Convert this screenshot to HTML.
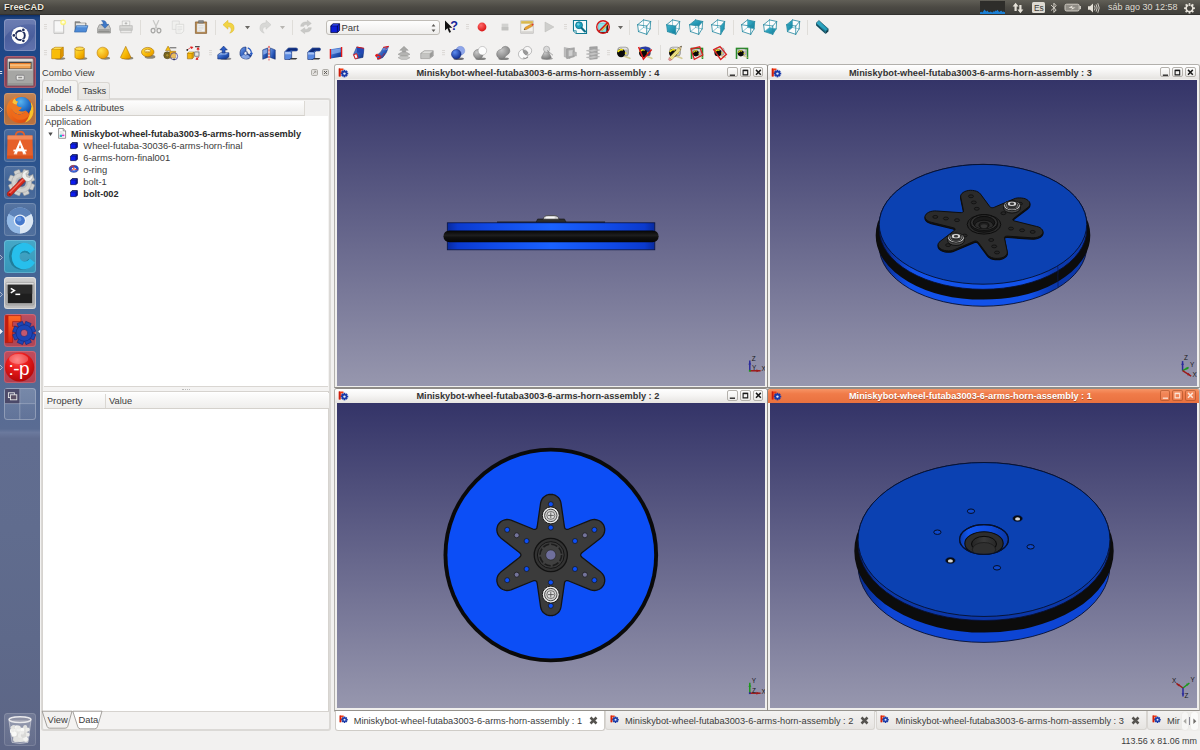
<!DOCTYPE html>
<html lang="es"><head><meta charset="utf-8"><title>FreeCAD</title>
<style>

*{box-sizing:border-box;margin:0;padding:0}
html,body{width:1200px;height:750px;overflow:hidden;background:#f2f1f0}
body{font-family:"Liberation Sans",sans-serif;font-size:9.3px;color:#3c3c3c}
#screen{position:relative;width:1200px;height:750px;overflow:hidden;background:#f2f1f0}
.abs{position:absolute}
svg{position:absolute;overflow:visible}
#topbar{position:absolute;left:0;top:0;width:1200px;height:15px;background:linear-gradient(#615f57,#4c4a44 50%,#403f3b);border-bottom:1px solid #33322f}
#topbar .title{position:absolute;left:4px;top:1px;font-weight:bold;font-size:9.2px;color:#ece8df;letter-spacing:.1px;line-height:12px;text-shadow:0 0 1.2px #1a1a18,0 .5px 1px #1a1a18}
#topbar .clock{position:absolute;left:1108px;top:1px;font-size:9px;color:#dfdbd2;line-height:12px;white-space:nowrap}
#launcher{position:absolute;left:0;top:15px;width:40.3px;height:735px;
 background:linear-gradient(#0c2e66 0,#1a3f7c 2.5px,#1f4584 5px,#1f4a8a 10%,#27508c 17%,#34598f 25%,#446494 34%,#4f6a96 44%,#566b94 52%,#5a6c93 56.3%,#6b799d 56.8%,#616d90 57.6%,#606c8e 70%,#5e698a 85%,#5c6585 100%)}
.tile{position:absolute;left:4px;width:32px;height:32.5px;border-radius:3.5px;overflow:hidden}
.tile svg{left:0;top:0}
.txt{position:absolute;white-space:nowrap;line-height:12px}
.b{font-weight:bold}
</style></head>
<body>
<div id="screen">
<div id="topbar"><span class="title">FreeCAD</span>
<div class="abs" style="left:980px;top:1px;width:25px;height:13px;background:#2e2d2a"></div><svg style="left:980px;top:1px" width="25" height="13"><polygon points="0,13 0,11.2 1.5,10.8 2.5,11.4 3.5,10 4.5,8.6 5.5,9.8 6.5,10.6 7.5,9.6 8.5,10.9 9.5,11.3 10.5,10.4 11.5,11 12.5,11.4 13.5,10.2 14.5,10.8 15.5,9.4 16.5,10 17.5,8.8 18.5,10.3 19.5,11 20.5,10.1 21.5,9.7 22.5,10.9 23.5,10.6 25,11.2 25,13" fill="#1b7fd4"/></svg><svg style="left:1012px;top:2px" width="12" height="12"><path d="M3.6 .8 L6.6 4.6 H4.7 V9 H2.5 V4.6 H.6Z M8.4 11.2 L5.4 7.4 H7.3 V3 H9.5 V7.4 H11.4Z" fill="#e6e2d9"/></svg><div class="abs" style="left:1032px;top:1.5px;width:12.5px;height:11.5px;background:#dedad2;border-radius:1.5px"></div><span class="txt" style="left:1034px;top:1.5px;font-size:8.4px;color:#3c3b37;line-height:12px;letter-spacing:-.2px">Es</span><svg style="left:1050px;top:2px" width="8" height="12"><path d="M1.3 3.3 L6.2 7.9 L3.9 10.4 V1.2 L6.2 3.7 L1.3 8.3" fill="none" stroke="#dcd8cf" stroke-width=".9" stroke-linejoin="round" stroke-linecap="round"/></svg><svg style="left:1064px;top:3px" width="18" height="10"><rect x="1" y="1.2" width="14.2" height="6.8" rx="1.6" fill="#8f8c85" stroke="#d8d4cb" stroke-width=".9"/><rect x="15.6" y="3" width="1.3" height="3.2" fill="#d8d4cb"/><path d="M4.5 4.8 L8.6 2.6 L8 4.4 H11.6 L7.4 6.8 L8 5 Z" fill="#e6e2d9"/></svg><svg style="left:1087px;top:2px" width="14" height="12"><path d="M1 4.3 H3 L6 1.6 V10.4 L3 7.7 H1Z" fill="#e6e2d9"/><path d="M7.6 3.9 Q8.9 6 7.6 8.1 M9.3 2.7 Q11.2 6 9.3 9.3 M11 1.6 Q13.6 6 11 10.4" fill="none" stroke="#dcd8cf" stroke-width=".9" stroke-linecap="round"/></svg><svg style="left:1184px;top:1.5px" width="11" height="12"><g transform="translate(5.5,6.2)"><g fill="#e6e2d9"><rect x="-.9" y="-5.4" width="1.8" height="2.6" transform="rotate(0)"/><rect x="-.9" y="-5.4" width="1.8" height="2.6" transform="rotate(45)"/><rect x="-.9" y="-5.4" width="1.8" height="2.6" transform="rotate(90)"/><rect x="-.9" y="-5.4" width="1.8" height="2.6" transform="rotate(135)"/><rect x="-.9" y="-5.4" width="1.8" height="2.6" transform="rotate(180)"/><rect x="-.9" y="-5.4" width="1.8" height="2.6" transform="rotate(225)"/><rect x="-.9" y="-5.4" width="1.8" height="2.6" transform="rotate(270)"/><rect x="-.9" y="-5.4" width="1.8" height="2.6" transform="rotate(315)"/></g><circle r="3.3" fill="none" stroke="#e6e2d9" stroke-width="1.5"/><rect x="-.7" y="-5.6" width="1.4" height="4.2" fill="#e6e2d9" stroke="#46443f" stroke-width=".5"/></g></svg><span class="clock">sáb ago 30 12:58</span></div>
<div id="launcher">
<div class="tile" style="top:3.6999999999999993px;background:linear-gradient(#5d70ac,#4a5e9c 55%,#5468a8);box-shadow:inset 0 0 0 1px rgba(255,255,255,.2)"><svg width="32" height="32.5" viewBox="0 0 32 32.5"><path d="M0 20 Q10 2 32 6 V0 H0Z" fill="rgba(255,255,255,.10)"/><path d="M4 32 Q30 30 32 8 V32Z" fill="rgba(255,255,255,.07)"/><circle cx="16.2" cy="16.4" r="8.6" fill="#fdfdfd"/><circle cx="16.2" cy="16.4" r="4.6" fill="none" stroke="#1e2c5c" stroke-width="1.9"/><circle cx="9.90" cy="16.40" r="2.1" fill="#fdfdfd"/><circle cx="9.90" cy="16.40" r="1.35" fill="#1e2c5c"/><circle cx="19.35" cy="10.94" r="2.1" fill="#fdfdfd"/><circle cx="19.35" cy="10.94" r="1.35" fill="#1e2c5c"/><circle cx="19.35" cy="21.86" r="2.1" fill="#fdfdfd"/><circle cx="19.35" cy="21.86" r="1.35" fill="#1e2c5c"/></svg></div>
<div class="tile" style="top:40.8px;background:linear-gradient(#96495c,#883f52 60%,#8e4558);box-shadow:inset 0 0 0 1px rgba(255,190,200,.22)"><svg width="32" height="32.5" viewBox="0 0 32 32.5"><path d="M3.4 4 Q3.4 2.4 5 2.4 H27.6 Q29.2 2.4 29.2 4 V29.4 H3.4Z" fill="#b1b1af" stroke="#77757a" stroke-width=".7"/><path d="M4 3 H28.6 V5.4 H4Z" fill="#dcdcda"/><path d="M5 5.8 H27.6 V13.4 H5Z" fill="#4a4846"/><path d="M6 7 H26.6 V12.4 H6Z" fill="#f0a050"/><path d="M6 8.6 H26.6 V9.8 H6Z" fill="#f8c88c"/><path d="M6 7 H26.6 V7.9 H6Z" fill="#e87c28"/><path d="M4 13 H28.6 V29 H4Z" fill="#a6a6a4"/><path d="M4 13 H28.6 V14.6 H4Z" fill="#c9c9c7"/><path d="M4 27 H28.6 V29 H4Z" fill="#979795"/><rect x="12.2" y="19.2" width="8" height="4.8" rx="1" fill="#e9e9e7" stroke="#77757a" stroke-width=".8"/><rect x="14.2" y="20.8" width="4" height="1.5" fill="#8c8a88"/></svg></div>
<div class="tile" style="top:77.7px;background:linear-gradient(#c58656,#b26c3a 60%,#b87444);box-shadow:inset 0 0 0 1px rgba(255,225,195,.22)"><svg width="32" height="32.5" viewBox="0 0 32 32.5"><defs><radialGradient id="ffg" cx="45%" cy="25%" r="80%"><stop offset="0" stop-color="#5ab4ee"/><stop offset=".5" stop-color="#2474cc"/><stop offset="1" stop-color="#143a8c"/></radialGradient><linearGradient id="ffo" x1="0" y1="0" x2="1" y2="1"><stop offset="0" stop-color="#f08a2a"/><stop offset=".5" stop-color="#ea6418"/><stop offset="1" stop-color="#d8400c"/></linearGradient></defs><circle cx="16" cy="16.6" r="13.4" fill="url(#ffo)"/><path d="M27 9 Q31 15 28.6 22.4 Q26 28 21 29.4 Q27.4 23 25.6 13Z" fill="#f8c22a"/><circle cx="17.6" cy="13.6" r="9.8" fill="url(#ffg)"/><path d="M4.4 10.6 Q6.4 6.6 10.6 5.4 Q11.4 7.8 14 8.8 Q12 10.4 12.8 12.6 Q14.6 14.6 17.8 14.2 Q17.2 16.8 14.6 17.6 Q18 19.6 21.6 17.6 Q19.6 21.6 15 21.4 Q10 21 8 16.6 Q5.4 14.6 4.4 10.6Z" fill="#ee7a20"/><path d="M8.4 9.4 Q10.2 11.6 12.8 11.4 Q12.6 9.8 14 8.8 Q11.4 7.8 10.6 5.4 Q8.8 7 8.4 9.4Z" fill="#f8c43a"/><path d="M8 16.6 Q10 21 15 21.4 Q19.6 21.6 21.6 17.6 Q24 19 25.4 22 Q21 28 13.4 26.4 Q7.4 24 6 17.6Z" fill="#ee6a1a"/></svg></div>
<div class="tile" style="top:114.30000000000001px;background:linear-gradient(rgba(255,255,255,.17),rgba(255,255,255,.07) 50%,rgba(255,255,255,.11));box-shadow:inset 0 0 0 1px rgba(255,255,255,.16)"><svg width="32" height="32.5" viewBox="0 0 32 32.5"><path d="M11.6 7 Q11.6 2.6 16 2.6 Q20.4 2.6 20.4 7" fill="none" stroke="#e0602c" stroke-width="1.6"/><path d="M3.6 6.4 H28.4 L29 29.4 H3Z" fill="#e6602a"/><path d="M3.6 6.4 H28.4 L28.5 10.4 H3.5Z" fill="#f2895a"/><path d="M3.1 26.4 H28.9 L29 29.4 H3Z" fill="#d6501c"/><path d="M16 10.8 L22 24.6 H19 L18 21.8 H14 L13 24.6 H10Z M16 15.4 L14.8 19.2 H17.2Z" fill="#fff" fill-rule="evenodd"/><rect x="9.4" y="20.6" width="13.2" height="1.8" fill="#fff"/><rect x="9.8" y="24.4" width="3.4" height=".9" fill="#fff"/><rect x="18.8" y="24.4" width="3.4" height=".9" fill="#fff"/></svg></div>
<div class="tile" style="top:151px;background:linear-gradient(rgba(255,255,255,.17),rgba(255,255,255,.07) 50%,rgba(255,255,255,.11));box-shadow:inset 0 0 0 1px rgba(255,255,255,.16)"><svg width="32" height="32.5" viewBox="0 0 32 32.5"><g transform="translate(17.6,16.6)" fill="#d2d2d0" stroke="#9a9a98" stroke-width=".5"><rect x="-3" y="-13.2" width="6" height="5.4" rx=".9" transform="rotate(22)"/><rect x="-3" y="-13.2" width="6" height="5.4" rx=".9" transform="rotate(67)"/><rect x="-3" y="-13.2" width="6" height="5.4" rx=".9" transform="rotate(112)"/><rect x="-3" y="-13.2" width="6" height="5.4" rx=".9" transform="rotate(157)"/><rect x="-3" y="-13.2" width="6" height="5.4" rx=".9" transform="rotate(202)"/><rect x="-3" y="-13.2" width="6" height="5.4" rx=".9" transform="rotate(247)"/><rect x="-3" y="-13.2" width="6" height="5.4" rx=".9" transform="rotate(292)"/><rect x="-3" y="-13.2" width="6" height="5.4" rx=".9" transform="rotate(337)"/><circle r="10"/></g><circle cx="17.6" cy="16.6" r="6.2" fill="#bcbcba"/><circle cx="17.6" cy="16.6" r="4.2" fill="#4a5e8e"/><path d="M3.6 26.6 L18.8 11.4 L22 14.6 L7 29.8 Q5 31 3.6 29.6 Q2.6 28 3.6 26.6Z" fill="#d8281c" stroke="#8a1810" stroke-width=".5"/><path d="M4.6 27 L19 12.6 L20 13.6 L5.6 28Z" fill="#f06a5a"/><circle cx="5.6" cy="28.2" r="1" fill="#8a1810"/><path d="M18 11 Q17.4 6.4 21.4 4.6 Q23.4 4 25 4.4 L21.8 7.8 L22.8 10.8 L25.8 11.6 L29 8.2 Q29.6 12 26.8 14.4 Q24.4 16.2 22 15.2Z" fill="#efefed" stroke="#9a9a98" stroke-width=".5"/></svg></div>
<div class="tile" style="top:188.2px;background:linear-gradient(rgba(255,255,255,.17),rgba(255,255,255,.07) 50%,rgba(255,255,255,.11));box-shadow:inset 0 0 0 1px rgba(255,255,255,.16)"><svg width="32" height="32.5" viewBox="0 0 32 32.5"><circle cx="16" cy="17.6" r="13" fill="#a8c6ea"/><path d="M16 17.6 L4.7 11.1 A13 13 0 0 1 27.3 11.1 Z" fill="#5c82b8"/><path d="M16 17.6 L27.3 11.1 A13 13 0 0 1 16.0 30.6 Z" fill="#dbe7f4"/><path d="M16 17.6 L16.0 30.6 A13 13 0 0 1 4.7 11.1 Z" fill="#93b9e6"/><circle cx="16" cy="17.6" r="6.2" fill="#eef3fa"/><circle cx="16" cy="17.6" r="4.9" fill="#4478cc"/><circle cx="15" cy="16.200000000000003" r="2.4" fill="#6a9ae0"/></svg></div>
<div class="tile" style="top:225px;background:linear-gradient(#46a8c8,#3696b8);box-shadow:inset 0 0 0 1px rgba(200,240,255,.25)"><svg width="32" height="32.5" viewBox="0 0 32 32.5"><path d="M30 10 Q24 1.6 15 3.4 Q5.4 6 5 16.4 Q5.4 26.8 15 29.4 Q24 31.2 30 22.8 L24.6 19 Q21.4 22.8 17 21.4 Q13.6 20 13.6 16.4 Q13.6 12.8 17 11.4 Q21.4 10 24.6 13.8Z" fill="#1f7e9c"/><path d="M31 9.4 Q25.4 1.4 17 3.2 Q8 5.6 7.6 16.2 Q8 26.6 17 29 Q25.4 30.8 31 22.8 L26 18.8 Q22.8 22.6 18.8 21.2 Q15.6 19.8 15.6 16.2 Q15.6 12.6 18.8 11.2 Q22.8 9.8 26 13.6Z" fill="#27bfec"/><path d="M26 13.6 Q22.8 9.8 18.8 11.2 Q16.6 12.2 15.9 14.2 Q18.4 12.2 21.4 12.6 Q23.6 13 25.2 14.6Z" fill="#1a86a8"/></svg></div>
<div class="tile" style="top:261.8px;background:linear-gradient(#d0d0d0,#b2b2b2 70%,#c0c0c0);box-shadow:inset 0 0 0 1px rgba(255,255,255,.4)"><svg width="32" height="32.5" viewBox="0 0 32 32.5"><rect x="2" y="5.4" width="28" height="22.6" rx="1.4" fill="#b4b4b4" stroke="#909090" stroke-width=".6"/><rect x="2.4" y="5.8" width="27.2" height="1.6" fill="#dedede"/><rect x="3.8" y="7.8" width="24.4" height="18.4" fill="#1e1e1e"/><rect x="3.8" y="7.8" width="24.4" height="9" fill="#2a2a2a"/><path d="M6.8 11.4 L10.4 13.6 L6.8 15.8" fill="none" stroke="#fff" stroke-width="1.5"/><rect x="11.4" y="16.6" width="4.8" height="1.5" fill="#fff"/></svg></div>
<div class="tile" style="top:299px;background:linear-gradient(#bd5062,#ab4052 60%,#b24858);box-shadow:inset 0 0 0 1px rgba(255,190,200,.22)"><svg width="32" height="32.5" viewBox="0 0 32 32.5"><defs><linearGradient id="lfF" x1="0" y1="0" x2="0" y2="1"><stop offset="0" stop-color="#ff6a26"/><stop offset="1" stop-color="#e02410"/></linearGradient></defs><path d="M1.4 1.6 H17 V7.6 H8.6 V12.4 H13.6 V18 H8.6 V28.6 H1.4Z" fill="url(#lfF)" stroke="#a01408" stroke-width=".6"/><path d="M1.4 1.6 H4.4 V28.6 H1.4Z" fill="#c41c0c"/><g transform="translate(20.2,19)" fill="#1d45b6" stroke="#0e2470" stroke-width=".5"><rect x="-2.9" y="-11.4" width="5.8" height="5" transform="rotate(22)"/><rect x="-2.9" y="-11.4" width="5.8" height="5" transform="rotate(67)"/><rect x="-2.9" y="-11.4" width="5.8" height="5" transform="rotate(112)"/><rect x="-2.9" y="-11.4" width="5.8" height="5" transform="rotate(157)"/><rect x="-2.9" y="-11.4" width="5.8" height="5" transform="rotate(202)"/><rect x="-2.9" y="-11.4" width="5.8" height="5" transform="rotate(247)"/><rect x="-2.9" y="-11.4" width="5.8" height="5" transform="rotate(292)"/><rect x="-2.9" y="-11.4" width="5.8" height="5" transform="rotate(337)"/><circle r="8.2"/></g><circle cx="20.2" cy="19" r="3.5" fill="#c25870" stroke="#0e2470" stroke-width=".5"/></svg></div>
<div class="tile" style="top:335.8px;background:linear-gradient(#c04c5c,#b04052);box-shadow:inset 0 0 0 1px rgba(255,190,200,.22)"><svg width="32" height="32.5" viewBox="0 0 32 32.5"><defs><radialGradient id="rp" cx="42%" cy="26%" r="78%"><stop offset="0" stop-color="#ff6060"/><stop offset=".4" stop-color="#ec1c1c"/><stop offset="1" stop-color="#b00606"/></radialGradient></defs><circle cx="15.6" cy="16" r="14.6" fill="url(#rp)"/><ellipse cx="14.6" cy="8" rx="9.6" ry="5" fill="rgba(255,255,255,.25)"/><text x="4.4" y="23.6" font-family="Liberation Sans,sans-serif" font-size="19" fill="#fff" letter-spacing="-.5">:-p</text></svg></div>
<div class="tile" style="top:372.7px;background:linear-gradient(rgba(255,255,255,.14),rgba(255,255,255,.05));box-shadow:inset 0 0 0 1px rgba(255,255,255,.28)"><svg width="32" height="32.5" viewBox="0 0 32 32.5"><rect x="1" y="1" width="14.6" height="14.4" fill="rgba(58,44,72,.62)"/><path d="M15.8 1 V31.5 M1 15.6 H31" stroke="rgba(255,255,255,.32)" stroke-width=".8"/><path d="M16.2 1 H31 V15.2 H16.2Z" fill="rgba(255,255,255,.07)"/><rect x="4.4" y="4.8" width="6" height="4.8" fill="none" stroke="#e8e8e8" stroke-width=".9"/><rect x="6.4" y="6.8" width="6.4" height="5" fill="#5c5064" stroke="#e8e8e8" stroke-width=".9"/></svg></div>
<div class="tile" style="top:698px;background:linear-gradient(rgba(255,255,255,.13),rgba(255,255,255,.05));box-shadow:inset 0 0 0 1px rgba(255,255,255,.14)"><svg width="32" height="32.5" viewBox="0 0 32 32.5"><path d="M5 7.4 L8 29.4 Q16 31.6 24 29.4 L27 7.4Z" fill="rgba(225,225,230,.30)" stroke="rgba(245,245,248,.45)" stroke-width=".6"/><path d="M8.6 16 L9.8 28 Q16 29.8 22.2 28 L23.4 16 Q16 13 8.6 16Z" fill="#e6e6e4"/><circle cx="12.0" cy="15.4" r="2.1" fill="#ececea"/><circle cx="9.8" cy="14.3" r="2.2" fill="#e2e2e0"/><circle cx="20.6" cy="24.3" r="1.9" fill="#d9d9d7"/><circle cx="13.9" cy="24.4" r="2.5" fill="#e2e2e0"/><circle cx="11.7" cy="26.4" r="2.5" fill="#e2e2e0"/><circle cx="20.6" cy="16.6" r="2.0" fill="#e2e2e0"/><circle cx="9.7" cy="22.1" r="2.4" fill="#d9d9d7"/><circle cx="12.2" cy="17.3" r="2.0" fill="#d9d9d7"/><circle cx="21.2" cy="14.1" r="2.0" fill="#e2e2e0"/><circle cx="21.3" cy="20.8" r="2.1" fill="#d9d9d7"/><circle cx="12.8" cy="20.0" r="1.9" fill="#e2e2e0"/><circle cx="20.8" cy="14.6" r="1.7" fill="#e2e2e0"/><circle cx="16.3" cy="22.7" r="2.4" fill="#ececea"/><circle cx="23.6" cy="16.6" r="2.1" fill="#ececea"/><circle cx="18.1" cy="19.9" r="1.9" fill="#fafaf8"/><circle cx="19.8" cy="18.3" r="2.3" fill="#e2e2e0"/><circle cx="9.9" cy="14.8" r="1.9" fill="#d9d9d7"/><circle cx="17.8" cy="17.2" r="2.0" fill="#ececea"/><circle cx="12.8" cy="14.3" r="2.1" fill="#f4f4f2"/><circle cx="22.0" cy="26.8" r="2.4" fill="#e2e2e0"/><circle cx="8.7" cy="17.9" r="2.7" fill="#fafaf8"/><circle cx="21.5" cy="25.7" r="2.4" fill="#f4f4f2"/><circle cx="12.9" cy="16.6" r="2.1" fill="#ececea"/><circle cx="12.2" cy="22.0" r="1.9" fill="#d9d9d7"/><circle cx="8.5" cy="14.6" r="1.9" fill="#e2e2e0"/><circle cx="23.6" cy="21.7" r="2.1" fill="#ececea"/><circle cx="14.8" cy="16.8" r="1.8" fill="#f4f4f2"/><circle cx="19.6" cy="22.0" r="2.7" fill="#d9d9d7"/><circle cx="9.0" cy="20.6" r="1.9" fill="#f4f4f2"/><circle cx="10.3" cy="21.1" r="2.5" fill="#fafaf8"/><circle cx="18.3" cy="16.7" r="1.9" fill="#fafaf8"/><circle cx="14.6" cy="14.5" r="2.1" fill="#ececea"/><circle cx="18.2" cy="19.7" r="1.9" fill="#ececea"/><circle cx="8.9" cy="17.4" r="1.9" fill="#ececea"/><ellipse cx="16" cy="6.6" rx="11" ry="2.9" fill="rgba(170,170,180,.55)" stroke="#e9e9ec" stroke-width="1.5"/><path d="M5 7.4 L8 29.4 Q16 31.6 24 29.4 L27 7.4" fill="none" stroke="rgba(245,245,248,.35)" stroke-width=".6"/></svg></div>
<svg style="left:0px;top:91.5px" width="3" height="5"><path d="M0 0 L2.4 2.5 L0 5" fill="none" stroke="#dcdce6" stroke-width=".7"/></svg><svg style="left:0px;top:239.5px" width="3" height="5"><path d="M0 0 L2.4 2.5 L0 5" fill="none" stroke="#dcdce6" stroke-width=".7"/></svg><svg style="left:0px;top:276.5px" width="3" height="5"><path d="M0 0 L2.4 2.5 L0 5" fill="none" stroke="#dcdce6" stroke-width=".7"/></svg><svg style="left:0px;top:313.5px" width="3" height="5"><path d="M0 0 L2.4 2.5 L0 5" fill="none" stroke="#dcdce6" stroke-width=".7"/></svg><svg style="left:0px;top:349.5px" width="3" height="5"><path d="M0 0 L2.4 2.5 L0 5" fill="none" stroke="#dcdce6" stroke-width=".7"/></svg><svg style="left:0px;top:313.5px" width="3" height="5"><path d="M0 0 L2.6 2.5 L0 5Z" fill="#f0f0f4"/></svg><svg style="left:37.6px;top:313.5px" width="3" height="5"><path d="M2.8 0 L.2 2.5 L2.8 5Z" fill="#f0f0f4"/></svg><svg style="left:0px;top:56.0px" width="2.4" height="3"><path d="M0 .5 H2.2 M0 2.5 H2.2" stroke="#f0f0f4" stroke-width=".9"/></svg></div>
<div id="toolbars" class="abs" style="left:41px;top:15px;width:1159px;height:50px">
<svg width="0" height="0" style="left:0;top:0"><defs>
<linearGradient id="gy" x1="0" y1="0" x2="1" y2="1"><stop offset="0" stop-color="#ffe24a"/><stop offset=".6" stop-color="#f6b400"/><stop offset="1" stop-color="#d98c00"/></linearGradient>
<linearGradient id="gb" x1="0" y1="0" x2="1" y2="1"><stop offset="0" stop-color="#6f9be8"/><stop offset=".6" stop-color="#2352b4"/><stop offset="1" stop-color="#12327c"/></linearGradient>
<linearGradient id="gg" x1="0" y1="0" x2="1" y2="1"><stop offset="0" stop-color="#d6d6d6"/><stop offset="1" stop-color="#8a8a8a"/></linearGradient>
<linearGradient id="gt" x1="0" y1="0" x2="1" y2="1"><stop offset="0" stop-color="#3fb6d0"/><stop offset="1" stop-color="#0d7e9c"/></linearGradient>
<radialGradient id="rb" cx="35%" cy="30%" r="75%"><stop offset="0" stop-color="#5c8cf0"/><stop offset="1" stop-color="#0c2a8c"/></radialGradient>
<radialGradient id="rg" cx="35%" cy="30%" r="75%"><stop offset="0" stop-color="#c8c8c8"/><stop offset="1" stop-color="#7c7c7c"/></radialGradient>
<radialGradient id="ry" cx="35%" cy="30%" r="75%"><stop offset="0" stop-color="#ffe24a"/><stop offset="1" stop-color="#ee9c00"/></radialGradient>
</defs></svg><svg style="left:3.0px;top:8.3px" width="3" height="8"><path d="M0 1.5 H3 M0 3.6 H3 M0 5.7 H3" stroke="#d2cfca" stroke-width=".7"/></svg><svg style="left:9.75px;top:4.3px" width="16" height="16" viewBox="0 0 24 24"><path d="M4.5 2.5 H19 V21.5 H4.5Z" fill="#f7f7f7" stroke="#a8a8a6" stroke-width="1"/><path d="M5.5 19 H18 V20.8 H5.5Z" fill="#dddddb"/><circle cx="18.2" cy="5" r="4.4" fill="#fff46a" opacity=".85"/><circle cx="18.2" cy="5" r="2.2" fill="#fffde0"/></svg><svg style="left:32.0px;top:4.3px" width="16" height="16" viewBox="0 0 24 24"><path d="M3 4 H10 L11.6 6 H19.6 V18 H3Z" fill="#8d8d8b" stroke="#6a6a68" stroke-width=".8"/><path d="M4.4 6.4 H18.4 V12 H4.4Z" fill="#e8e8e6"/><path d="M2.2 19.6 L5 10 H22.4 L19.6 19.6Z" fill="#4d8ad6" stroke="#2b5fa4" stroke-width=".9"/><path d="M5.6 10.9 H21.2 L20.8 12.4 H5.2Z" fill="#86b4ea"/></svg><svg style="left:55.0px;top:4.3px" width="16" height="16" viewBox="0 0 24 24"><path d="M2.4 14 L5 8.6 H19 L21.6 14 V21 H2.4Z" fill="#c6c6c4" stroke="#7c7c7a" stroke-width=".9"/><path d="M3.4 15 H20.6 V20 H3.4Z" fill="#a4a4a2"/><path d="M3.4 18.2 H20.6 V20 H3.4Z" fill="#8a8a88"/><path d="M8.4 2.4 Q15.6 1.6 15.8 8 H19 L13.4 14 L7.8 8 H11 Q11 5 8.4 2.4Z" fill="#3d78c8" stroke="#27549a" stroke-width=".7"/></svg><svg style="left:77.0px;top:4.3px" width="16" height="16" viewBox="0 0 24 24"><path d="M6.4 3 H17.6 V10 H6.4Z" fill="#f2f2f0" stroke="#b2b2b0" stroke-width=".8"/><path d="M12 4.6 V8.4 M10 6.6 H14" stroke="#b0b0ae" stroke-width="1.3"/><path d="M2.6 10 H21.4 V17 H2.6Z" fill="#d8d8d6" stroke="#a6a6a4" stroke-width=".8"/><path d="M4 17 H20 V20.6 H4Z" fill="#ecebea" stroke="#b0b0ae" stroke-width=".8"/><path d="M3.4 14.8 H20.6" stroke="#b8b8b6" stroke-width="1"/></svg><svg style="left:106.5px;top:4.3px" width="16" height="16" viewBox="0 0 24 24"><path d="M8 2.4 L13.4 14 M16 2.4 L10.6 14" stroke="#c9c9c7" stroke-width="1.9" stroke-linecap="round"/><ellipse cx="7.6" cy="17.4" rx="2.9" ry="3.3" fill="none" stroke="#a6a6a4" stroke-width="1.8"/><ellipse cx="16.4" cy="17.4" rx="2.9" ry="3.3" fill="none" stroke="#a6a6a4" stroke-width="1.8"/></svg><svg style="left:129.0px;top:4.3px" width="16" height="16" viewBox="0 0 24 24"><path d="M3.4 3 H14 V15.6 H3.4Z" fill="#f0f0ee" stroke="#d2d2d0" stroke-width=".9"/><path d="M9 8 H20.6 V18 L17.6 21.4 H9Z" fill="#f4f4f2" stroke="#cfcfcd" stroke-width=".9"/><path d="M11 11.4 H18.4 M11 13.6 H18.4 M11 15.8 H18.4 M11 18 H16" stroke="#dadad8" stroke-width=".9"/></svg><svg style="left:151.75px;top:4.3px" width="16" height="16" viewBox="0 0 24 24"><path d="M3.6 4.4 H20.4 V21.6 H3.6Z" fill="#b98a4e" stroke="#80592a" stroke-width="1"/><path d="M6 7 H18 V19.4 H6Z" fill="#f4f4f2" stroke="#a8a8a6" stroke-width=".6"/><path d="M8.4 2.4 H15.6 V6 H8.4Z" fill="#8a8a88" stroke="#5c5c5a" stroke-width=".7"/><path d="M8 10 H16 M8 12.4 H16 M8 14.8 H16 M8 17.2 H13" stroke="#c4c4c2" stroke-width=".8"/></svg><svg style="left:180.0px;top:4.3px" width="16" height="16" viewBox="0 0 24 24"><path d="M3 8.6 L10.4 2 V5.8 Q19.6 5.8 19.6 13.6 Q19.6 19.4 13.2 21.2 Q16 18.6 15.4 15 Q14.6 11.4 10.4 11.4 V15.2Z" fill="#f2d444" stroke="#dcb82a" stroke-width=".8" stroke-linejoin="round"/></svg><svg style="left:216.0px;top:4.3px" width="16" height="16" viewBox="0 0 24 24"><path d="M21 8.6 L13.6 2 V5.8 Q4.4 5.8 4.4 13.6 Q4.4 19.4 10.8 21.2 Q8 18.6 8.6 15 Q9.4 11.4 13.6 11.4 V15.2Z" fill="#d8d8d6" stroke="#c8c8c6" stroke-width=".8" stroke-linejoin="round"/></svg><svg style="left:257.0px;top:4.3px" width="16" height="16" viewBox="0 0 24 24"><path d="M4 11 Q4.6 4.6 11.6 4.4 H14 V2 L20 6.6 L14 11 V8.4 H11.6 Q8.6 8.6 8.4 11Z" fill="#c9c9c7" stroke="#b8b8b6" stroke-width=".6"/><path d="M20 13 Q19.4 19.4 12.4 19.6 H10 V22 L4 17.4 L10 13 V15.6 H12.4 Q15.4 15.4 15.6 13Z" fill="#c9c9c7" stroke="#b8b8b6" stroke-width=".6"/></svg><svg style="left:402.0px;top:4.3px" width="16" height="16" viewBox="0 0 24 24"><path d="M3 2.4 L3 17.4 L6.6 14 L9.4 20.6 L12 19.4 L9.2 13 H14Z" fill="#111"/><text x="11" y="16" font-family="Liberation Sans,sans-serif" font-weight="bold" font-size="19" fill="#15259a">?</text></svg><svg style="left:432.75px;top:4.3px" width="16" height="16" viewBox="0 0 24 24"><defs><radialGradient id="rr" cx="38%" cy="32%" r="70%"><stop offset="0" stop-color="#ff6a6a"/><stop offset="1" stop-color="#d81414"/></radialGradient></defs><circle cx="12" cy="12" r="6.6" fill="url(#rr)"/></svg><svg style="left:455.5px;top:4.3px" width="16" height="16" viewBox="0 0 24 24"><rect x="7" y="7" width="10" height="10" fill="#d2d2d0"/><rect x="7" y="12" width="10" height="5" fill="#c2c2c0"/></svg><svg style="left:477.75px;top:4.3px" width="16" height="16" viewBox="0 0 24 24"><path d="M2.6 2.6 H21.4 V21.4 H2.6Z" fill="#f2f1ee" stroke="#aaa8a4" stroke-width=".9"/><path d="M3.2 3.2 H20.8 V7 H3.2Z" fill="#d8b84e"/><path d="M3.2 18.4 H20.8 V20.8 H3.2Z" fill="#d4d2ce"/><path d="M7.6 16 L9 12.6 L18.6 7.4 L20.6 10.6 L11 15.8Z" fill="#eaa02c" stroke="#a06414" stroke-width=".6"/><path d="M18.6 7.4 L20 6.6 Q21.6 6.6 22 8.4 L20.6 10.6Z" fill="#e03a2a"/><path d="M7.6 16 L8.3 14.2 L9.6 15.6Z" fill="#333"/></svg><svg style="left:499.75px;top:4.3px" width="16" height="16" viewBox="0 0 24 24"><path d="M6 4.6 L19.4 12 L6 19.4Z" fill="#cfcfcd" stroke="#bcbcba" stroke-width=".8"/></svg><svg style="left:531.0px;top:4.3px" width="16" height="16" viewBox="0 0 24 24"><path d="M2.2 2.2 H21.8 V21.8 H6.4 L2.2 17.6Z" fill="#f4fbfc" stroke="#107a92" stroke-width="1.6"/><path d="M2.2 17.6 H6.4 V21.8" fill="#bfe4ea" stroke="#107a92" stroke-width="1"/><circle cx="10.6" cy="9.4" r="5.2" fill="#1da2be" stroke="#0b6e86" stroke-width="1.2"/><circle cx="9.4" cy="8" r="2" fill="#6cd0e2"/><path d="M14.4 13.4 L19.4 18.6" stroke="#0b6e86" stroke-width="3.2" stroke-linecap="round"/></svg><svg style="left:553.5px;top:4.3px" width="16" height="16" viewBox="0 0 24 24"><path d="M5.4 6 H17 V19.4 H5.4Z" fill="#8ee4ea" stroke="#37aab8" stroke-width=".8"/><path d="M17 6 L19.6 8 V21 L17 19.4Z" fill="#222"/><path d="M5.4 19.4 H17 L19.6 21 H8Z" fill="#222"/><path d="M9 16.6 L19.4 5 L21 6.4 L10.8 18Z" fill="#f0c43a" stroke="#a07a14" stroke-width=".5"/><circle cx="12" cy="12" r="9.4" fill="none" stroke="#d01616" stroke-width="2.1"/><path d="M5.6 18.6 L18.6 5.6" stroke="#d01616" stroke-width="2.1"/></svg><svg style="left:773.0px;top:4.3px" width="16" height="16" viewBox="0 0 24 24"><path d="M3 6.4 L7.4 2.2 L21.6 15 L17.2 19.4Z" fill="url(#gt)" stroke="#0a4458" stroke-width=".9"/><path d="M17.2 19.4 L17.4 22.6 L21.8 18.2 L21.6 15Z" fill="#083a4a"/><path d="M3 6.4 L3.2 9.6 L17.4 22.6 L17.2 19.4Z" fill="#0a4e62"/><path d="M5 6.2 L7.2 4.2 L19.6 15.2 L17.4 17.2Z" fill="#2fa8c4" opacity=".7"/></svg><div class="abs" style="left:99.0px;top:4.800000000000001px;width:1px;height:15px;background:#dfddd9"></div><div class="abs" style="left:173.5px;top:4.800000000000001px;width:1px;height:15px;background:#dfddd9"></div><div class="abs" style="left:251.0px;top:4.800000000000001px;width:1px;height:15px;background:#dfddd9"></div><div class="abs" style="left:588.0px;top:4.800000000000001px;width:1px;height:15px;background:#dfddd9"></div><div class="abs" style="left:617.25px;top:4.800000000000001px;width:1px;height:15px;background:#dfddd9"></div><div class="abs" style="left:691.75px;top:4.800000000000001px;width:1px;height:15px;background:#dfddd9"></div><div class="abs" style="left:766.0px;top:4.800000000000001px;width:1px;height:15px;background:#dfddd9"></div><svg style="left:204.0px;top:11.0px" width="5" height="3.4"><path d="M0 0 H5 L2.5 3.2Z" fill="#6a6864"/></svg><svg style="left:239.0px;top:11.0px" width="5" height="3.4"><path d="M0 0 H5 L2.5 3.2Z" fill="#b8b6b2"/></svg><svg style="left:576.5px;top:11.0px" width="5" height="3.4"><path d="M0 0 H5 L2.5 3.2Z" fill="#6a6864"/></svg><svg style="left:425.0px;top:8.3px" width="3" height="8"><path d="M0 1.5 H3 M0 3.6 H3 M0 5.7 H3" stroke="#d2cfca" stroke-width=".7"/></svg><svg style="left:523.0px;top:8.3px" width="3" height="8"><path d="M0 1.5 H3 M0 3.6 H3 M0 5.7 H3" stroke="#d2cfca" stroke-width=".7"/></svg><svg style="left:595.25px;top:4.3px" width="16" height="16" viewBox="0 0 24 24"><polygon points="2.4,8.6 11.3,1.4 22,3.7 21.2,14.8 16.1,23 3.7,18.9" fill="rgba(255,255,255,.8)"/><path d="M11.3 12.7 L11.3 1.4 M21.2 14.8 L11.3 12.7 M3.7 18.9 L11.3 12.7" fill="none" stroke="#5fb0c2" stroke-width="1" stroke-linecap="round"/><path d="M2.4 8.6 L16.1 10.6 M16.1 10.6 L16.1 23 M16.1 23 L3.7 18.9 M3.7 18.9 L2.4 8.6 M11.3 1.4 L22 3.7 M22 3.7 L21.2 14.8 M2.4 8.6 L11.3 1.4 M16.1 10.6 L22 3.7 M16.1 23 L21.2 14.8" fill="none" stroke="#2a8ca2" stroke-width="1.25" stroke-linecap="round"/></svg><svg style="left:624.25px;top:4.3px" width="16" height="16" viewBox="0 0 24 24"><polygon points="2.4,8.6 11.3,1.4 22,3.7 21.2,14.8 16.1,23 3.7,18.9" fill="rgba(255,255,255,.8)"/><path d="M11.3 12.7 L11.3 1.4 M21.2 14.8 L11.3 12.7 M3.7 18.9 L11.3 12.7" fill="none" stroke="#5fb0c2" stroke-width="1" stroke-linecap="round"/><polygon points="2.4,8.6 16.1,10.6 16.1,23 3.7,18.9" fill="url(#gt)"/><path d="M2.4 8.6 L16.1 10.6 M16.1 10.6 L16.1 23 M16.1 23 L3.7 18.9 M3.7 18.9 L2.4 8.6 M11.3 1.4 L22 3.7 M22 3.7 L21.2 14.8 M2.4 8.6 L11.3 1.4 M16.1 10.6 L22 3.7 M16.1 23 L21.2 14.8" fill="none" stroke="#2a8ca2" stroke-width="1.25" stroke-linecap="round"/></svg><svg style="left:646.75px;top:4.3px" width="16" height="16" viewBox="0 0 24 24"><polygon points="2.4,8.6 11.3,1.4 22,3.7 21.2,14.8 16.1,23 3.7,18.9" fill="rgba(255,255,255,.8)"/><path d="M11.3 12.7 L11.3 1.4 M21.2 14.8 L11.3 12.7 M3.7 18.9 L11.3 12.7" fill="none" stroke="#5fb0c2" stroke-width="1" stroke-linecap="round"/><polygon points="2.4,8.6 11.3,1.4 22,3.7 16.1,10.6" fill="url(#gt)"/><path d="M2.4 8.6 L16.1 10.6 M16.1 10.6 L16.1 23 M16.1 23 L3.7 18.9 M3.7 18.9 L2.4 8.6 M11.3 1.4 L22 3.7 M22 3.7 L21.2 14.8 M2.4 8.6 L11.3 1.4 M16.1 10.6 L22 3.7 M16.1 23 L21.2 14.8" fill="none" stroke="#2a8ca2" stroke-width="1.25" stroke-linecap="round"/></svg><svg style="left:669.25px;top:4.3px" width="16" height="16" viewBox="0 0 24 24"><polygon points="2.4,8.6 11.3,1.4 22,3.7 21.2,14.8 16.1,23 3.7,18.9" fill="rgba(255,255,255,.8)"/><path d="M11.3 12.7 L11.3 1.4 M21.2 14.8 L11.3 12.7 M3.7 18.9 L11.3 12.7" fill="none" stroke="#5fb0c2" stroke-width="1" stroke-linecap="round"/><polygon points="16.1,10.6 22,3.7 21.2,14.8 16.1,23" fill="url(#gt)"/><path d="M2.4 8.6 L16.1 10.6 M16.1 10.6 L16.1 23 M16.1 23 L3.7 18.9 M3.7 18.9 L2.4 8.6 M11.3 1.4 L22 3.7 M22 3.7 L21.2 14.8 M2.4 8.6 L11.3 1.4 M16.1 10.6 L22 3.7 M16.1 23 L21.2 14.8" fill="none" stroke="#2a8ca2" stroke-width="1.25" stroke-linecap="round"/></svg><svg style="left:698.5px;top:4.3px" width="16" height="16" viewBox="0 0 24 24"><polygon points="2.4,8.6 11.3,1.4 22,3.7 21.2,14.8 16.1,23 3.7,18.9" fill="rgba(255,255,255,.8)"/><polygon points="11.3,1.4 22,3.7 21.2,14.8 11.3,12.7" fill="url(#gt)"/><path d="M11.3 12.7 L11.3 1.4 M21.2 14.8 L11.3 12.7 M3.7 18.9 L11.3 12.7" fill="none" stroke="#5fb0c2" stroke-width="1" stroke-linecap="round"/><path d="M2.4 8.6 L16.1 10.6 M16.1 10.6 L16.1 23 M16.1 23 L3.7 18.9 M3.7 18.9 L2.4 8.6 M11.3 1.4 L22 3.7 M22 3.7 L21.2 14.8 M2.4 8.6 L11.3 1.4 M16.1 10.6 L22 3.7 M16.1 23 L21.2 14.8" fill="none" stroke="#2a8ca2" stroke-width="1.25" stroke-linecap="round"/></svg><svg style="left:721.0px;top:4.3px" width="16" height="16" viewBox="0 0 24 24"><polygon points="2.4,8.6 11.3,1.4 22,3.7 21.2,14.8 16.1,23 3.7,18.9" fill="rgba(255,255,255,.8)"/><polygon points="3.7,18.9 16.1,23 21.2,14.8 11.3,12.7" fill="url(#gt)"/><path d="M11.3 12.7 L11.3 1.4 M21.2 14.8 L11.3 12.7 M3.7 18.9 L11.3 12.7" fill="none" stroke="#5fb0c2" stroke-width="1" stroke-linecap="round"/><path d="M2.4 8.6 L16.1 10.6 M16.1 10.6 L16.1 23 M16.1 23 L3.7 18.9 M3.7 18.9 L2.4 8.6 M11.3 1.4 L22 3.7 M22 3.7 L21.2 14.8 M2.4 8.6 L11.3 1.4 M16.1 10.6 L22 3.7 M16.1 23 L21.2 14.8" fill="none" stroke="#2a8ca2" stroke-width="1.25" stroke-linecap="round"/></svg><svg style="left:743.5px;top:4.3px" width="16" height="16" viewBox="0 0 24 24"><polygon points="2.4,8.6 11.3,1.4 22,3.7 21.2,14.8 16.1,23 3.7,18.9" fill="rgba(255,255,255,.8)"/><polygon points="2.4,8.6 11.3,1.4 11.3,12.7 3.7,18.9" fill="url(#gt)"/><path d="M11.3 12.7 L11.3 1.4 M21.2 14.8 L11.3 12.7 M3.7 18.9 L11.3 12.7" fill="none" stroke="#5fb0c2" stroke-width="1" stroke-linecap="round"/><path d="M2.4 8.6 L16.1 10.6 M16.1 10.6 L16.1 23 M16.1 23 L3.7 18.9 M3.7 18.9 L2.4 8.6 M11.3 1.4 L22 3.7 M22 3.7 L21.2 14.8 M2.4 8.6 L11.3 1.4 M16.1 10.6 L22 3.7 M16.1 23 L21.2 14.8" fill="none" stroke="#2a8ca2" stroke-width="1.25" stroke-linecap="round"/></svg><div class="abs" style="left:285px;top:5px;width:113.5px;height:15px;border:1px solid #c0bdb7;border-radius:3px;background:linear-gradient(#fefefe,#eeedeb)"></div><svg style="left:289px;top:7.5px" width="10.5" height="10.5"><path d="M.8 2.8 L3 .8 H9.6 V7.4 L7.4 9.6 H.8Z" fill="#0c1ed8" stroke="#05083a" stroke-width=".8" stroke-linejoin="round"/><path d="M.8 2.8 H7.4 V9.6 M7.4 2.8 L9.6 .8" fill="none" stroke="#05083a" stroke-width=".7"/><path d="M3.2 1.2 H8.8 L7.2 2.4 H1.8Z" fill="#3a50f0"/></svg><span class="txt" style="left:300.5px;top:6.8px;font-size:9.5px;color:#3c3c3c">Part</span><svg style="left:390px;top:8px" width="5" height="10"><path d="M.6 3.4 L2.5 1 L4.4 3.4Z M.6 6.6 L2.5 9 L4.4 6.6Z" fill="#5c5a56"/></svg><svg style="left:3.0px;top:33.7px" width="3" height="8"><path d="M0 1.5 H3 M0 3.6 H3 M0 5.7 H3" stroke="#d2cfca" stroke-width=".7"/></svg><svg style="left:8.5px;top:29.7px" width="16" height="16" viewBox="0 0 24 24"><ellipse cx="15" cy="20.4" rx="8" ry="1.9" fill="rgba(60,50,20,.55)"/><path d="M2.6 6.4 L7.6 3.4 H20 V16.6 L15.6 20.6 H2.6Z" fill="url(#gy)" stroke="#a86c00" stroke-width=".9" stroke-linejoin="round"/><path d="M2.6 6.4 H15.6 V20.6 M15.6 6.4 L20 3.4" fill="none" stroke="#a86c00" stroke-width=".8"/><path d="M3.4 7.2 H14.8 V19.8 H3.4Z" fill="#f8bc08"/><path d="M15.9 7 L19.4 4.4 V16.2 L15.9 19.6Z" fill="#dc9400"/><path d="M7.8 4 H18.4 L15.4 5.8 H4.6Z" fill="#ffe460"/></svg><svg style="left:31.0px;top:29.7px" width="16" height="16" viewBox="0 0 24 24"><ellipse cx="15" cy="20.4" rx="8" ry="1.9" fill="rgba(60,50,20,.55)"/><path d="M4.4 5.6 V18.4 Q4.4 21 11.4 21 Q18.4 21 18.4 18.4 V5.6Z" fill="url(#gy)" stroke="#a86c00" stroke-width=".9"/><ellipse cx="11.4" cy="5.6" rx="7" ry="2.7" fill="#ffe052" stroke="#a86c00" stroke-width=".9"/></svg><svg style="left:53.5px;top:29.7px" width="16" height="16" viewBox="0 0 24 24"><ellipse cx="15.6" cy="19.8" rx="7" ry="2.2" fill="rgba(60,50,20,.55)"/><circle cx="11.6" cy="11.8" r="8.6" fill="url(#ry)" stroke="#b87800" stroke-width=".8"/></svg><svg style="left:76.5px;top:29.7px" width="16" height="16" viewBox="0 0 24 24"><ellipse cx="15.6" cy="19.8" rx="7.4" ry="2.2" fill="rgba(60,50,20,.55)"/><path d="M11.6 2 L19.4 18.4 Q19.4 21 11.6 21 Q3.8 21 3.8 18.4Z" fill="url(#gy)" stroke="#a86c00" stroke-width=".9" stroke-linejoin="round"/></svg><svg style="left:99.0px;top:29.7px" width="16" height="16" viewBox="0 0 24 24"><ellipse cx="15" cy="17.6" rx="8" ry="3" fill="rgba(60,50,20,.55)"/><ellipse cx="11.6" cy="10.6" rx="9.4" ry="7" fill="url(#gy)" stroke="#a86c00" stroke-width=".9"/><ellipse cx="11.4" cy="9" rx="4.6" ry="2.5" fill="#fff6c0" stroke="#a86c00" stroke-width=".8"/><path d="M7 9.4 Q11.4 12.6 15.8 9.4 Q11.4 10.2 7 9.4Z" fill="#c88400"/></svg><svg style="left:121.5px;top:29.7px" width="16" height="16" viewBox="0 0 24 24"><path d="M7.6 1.6 L11.4 8.4 H3.8Z" fill="#f8c010" stroke="#8a5c00" stroke-width=".7"/><path d="M10 4.2 H20" stroke="#222" stroke-width="1.1"/><circle cx="6.4" cy="15.4" r="5.2" fill="#7a6a2a" stroke="#4a3a0a" stroke-width=".9"/><circle cx="6.4" cy="15.4" r="2.6" fill="#a88c2c" stroke="#4a3a0a" stroke-width=".6"/><path d="M10 9.4 H19 V19.6 H10Z" fill="#f0a808" stroke="#8a5c00" stroke-width=".7"/><circle cx="16.6" cy="17" r="5.4" fill="rgba(230,230,250,.35)" stroke="#3c3c9a" stroke-width="1.1"/><path d="M16.6 20 L14.8 22 H18.4Z" fill="#222"/></svg><svg style="left:144.0px;top:29.7px" width="16" height="16" viewBox="0 0 24 24"><path d="M3.6 12.4 L6 10.6 H13 V18.6 L10.8 20.8 H3.6Z" fill="#f4b408" stroke="#8a5c00" stroke-width=".8" stroke-linejoin="round"/><path d="M3.6 12.4 H10.8 V20.8 M10.8 12.4 L13 10.6" fill="none" stroke="#8a5c00" stroke-width=".7"/><path d="M6.2 10.8 H12.4 L10.6 12 H4.4Z" fill="#ffe460"/><rect x="14.6" y="10.4" width="6.4" height="6.4" fill="#e6e6e4" stroke="#555" stroke-width="1"/><path d="M15 2.6 H22" stroke="#111" stroke-width="1.4"/><circle cx="3.4" cy="7.4" r="1.3" fill="#111"/><path d="M4.6 6.6 L9 3.4 M12 3.4 L8.6 2.6 L9.8 5.8Z M19.6 4.4 V8.6 M17.8 6.4 L19.6 3.8 L21.4 6.4Z M21 18 L17.4 20.8 M19.6 21.6 L16.4 21.6 L18 18.8Z" fill="#e01818" stroke="#e01818" stroke-width="1"/></svg><svg style="left:174.75px;top:29.7px" width="16" height="16" viewBox="0 0 24 24"><ellipse cx="14.6" cy="20.6" rx="8.4" ry="1.8" fill="rgba(30,30,40,.5)"/><path d="M2.6 14.6 L7 11.6 H19.4 V17.6 L15.4 21 H2.6Z" fill="url(#gb)" stroke="#10286c" stroke-width=".8" stroke-linejoin="round"/><path d="M7.2 12.2 H18 L15.2 14.4 H4Z" fill="#9cbcf2"/><path d="M11.4 1.6 L17 7.4 H13.6 V12 H9.2 V7.4 H5.8Z" fill="#2a5cc4" stroke="#10286c" stroke-width=".8" stroke-linejoin="round"/></svg><svg style="left:197.0px;top:29.7px" width="16" height="16" viewBox="0 0 24 24"><path d="M12 12 L12 3 A9 9 0 1 0 20.2 15.6Z" fill="url(#gb)" stroke="#10286c" stroke-width=".9"/><path d="M12 12 L4.6 17.2 A9 9 0 0 0 18.4 18.4Z" fill="#a0bcf0" opacity=".8"/><circle cx="11.6" cy="12.4" r="2.6" fill="#eef2fc" stroke="#10286c" stroke-width=".7"/><path d="M14.6 4.4 Q20.4 6.6 20 13" fill="none" stroke="#2a5cc4" stroke-width="1.8"/><path d="M17.4 12 L20.2 16.4 L22.6 11.6Z" fill="#2a5cc4"/><path d="M13.6 9.6 V14 H16" fill="none" stroke="#10286c" stroke-width=".9"/></svg><svg style="left:219.75px;top:29.7px" width="16" height="16" viewBox="0 0 24 24"><path d="M2.6 7.4 L10 4.4 V18.6 L2.6 21.4Z" fill="url(#gb)" stroke="#10286c" stroke-width=".8"/><path d="M21.4 7.4 L14 4.4 V18.6 L21.4 21.4Z" fill="url(#gb)" stroke="#10286c" stroke-width=".8"/><path d="M3.4 8.4 L9.2 6 V12 L3.4 14.6Z" fill="#8eb0ee" opacity=".8"/><path d="M12 1.4 V23" stroke="#e01818" stroke-width="1.5" stroke-dasharray="3.4 1.6"/></svg><svg style="left:242.0px;top:29.7px" width="16" height="16" viewBox="0 0 24 24"><path d="M10 19.4 H21.6 L19.4 21.6 H8Z" fill="#3a3a3a"/><path d="M2.6 10 L8 4.4 H19.6 Q22.4 4.6 22 7.4 L20.6 9 H14.4 Q13 9.2 13 10.6 V19 L10.4 21.6 H2.6Z" fill="url(#gb)" stroke="#10286c" stroke-width=".8" stroke-linejoin="round"/><path d="M8.4 5 H19.4 Q21.4 5.2 21.2 7 L20 8.2 H12 L9 9.2 L3.8 9.8Z" fill="#0e2a78"/><path d="M3.2 10.6 H10 Q12.4 10.4 12.4 13 V18.6 L10 21 H3.2Z" fill="#5a8ae0"/><path d="M3.2 10.6 H10 Q12.4 10.4 12.4 13 V14 H3.2Z" fill="#a6c2f4"/></svg><svg style="left:264.5px;top:29.7px" width="16" height="16" viewBox="0 0 24 24"><path d="M10 19.4 H21.6 L19.4 21.6 H8Z" fill="#3a3a3a"/><path d="M2.6 10.6 L9.6 4.4 H20.6 L22 6 L20.6 9 H15 L13 11 V19 L10.4 21.6 H2.6Z" fill="url(#gb)" stroke="#10286c" stroke-width=".8" stroke-linejoin="round"/><path d="M9.8 5 H20.4 L21.2 6 L20.2 8.2 H14.6 L11 10.4 L4 10.4Z" fill="#0e2a78"/><path d="M3.2 11.2 H11 L12.4 12.4 V18.6 L10 21 H3.2Z" fill="#5a8ae0"/><path d="M3.2 11.2 H11 L12.4 12.4 V14.4 H3.2Z" fill="#a6c2f4"/></svg><svg style="left:287.0px;top:29.7px" width="16" height="16" viewBox="0 0 24 24"><path d="M3.6 6.4 L20.4 3.6 V17.6 L3.6 20.4Z" fill="url(#gb)"/><path d="M5 7.4 L19 5 V11 L5 14.4Z" fill="#8eb0ee" opacity=".75"/><path d="M3.6 6 V20.8 M20.4 3 V18" stroke="#e01818" stroke-width="2"/></svg><svg style="left:309.75px;top:29.7px" width="16" height="16" viewBox="0 0 24 24"><path d="M8.6 3 L19.4 5 L18 18.6 L6.4 21 L3.6 14.4Z" fill="url(#gb)" stroke="#10286c" stroke-width=".7"/><path d="M8.6 3 L19.4 5 L18.4 13 L9 11.4Z" fill="#2448b4"/><path d="M4 14.6 L8.4 13 L10.6 19 L6.4 20.8Z" fill="#f4f4f8" stroke="#e01818" stroke-width="1.5" stroke-linejoin="round"/><path d="M8.6 3 L19.4 5" stroke="#e01818" stroke-width="1.5"/></svg><svg style="left:332.75px;top:29.7px" width="16" height="16" viewBox="0 0 24 24"><path d="M14 4 L21.6 2.4 Q20 12 13 19 L5.6 21.6 Q4.4 17.4 5.4 14.6 Q11 11 14 4Z" fill="url(#gb)" stroke="#10286c" stroke-width=".7"/><path d="M14 4 L21.6 2.4 Q21 5 20.4 7.4 L12.4 8Z" fill="#5a8ae0"/><path d="M13.6 3.6 L22 2 M17 6.6 L21.6 1.6" stroke="#e01818" stroke-width="1.5"/><path d="M2 15.6 H9 V20.4 H4.6 M2 15.6 L5.4 13.4 M2 15.6 L5 18.4" fill="none" stroke="#e01818" stroke-width="1.6" stroke-linejoin="round"/><path d="M6.4 20.6 Q13 18.4 16 12" fill="none" stroke="#e01818" stroke-width=".9"/></svg><svg style="left:354.75px;top:29.7px" width="16" height="16" viewBox="0 0 24 24"><path d="M12 2 L18.4 8 H14.6 V10.4 H9.4 V8 H5.6Z" fill="#a8a8a6" stroke="#8a8a88" stroke-width=".6"/><path d="M3 14 L8 11 H16 L21 14 L16 16.4 H8Z" fill="#b4b4b2" stroke="#8e8e8c" stroke-width=".7"/><path d="M3 19 L8 16.6 H16 L21 19 L16 21.6 H8Z" fill="#c6c6c4" stroke="#9a9a98" stroke-width=".7"/></svg><svg style="left:377.75px;top:29.7px" width="16" height="16" viewBox="0 0 24 24"><path d="M2.6 12.4 L8 8.6 H21.4 V16.4 L16 20.4 H2.6Z" fill="#b4b4b2" stroke="#8a8a88" stroke-width=".8" stroke-linejoin="round"/><path d="M8.2 9.4 H20.2 L15.8 12.4 H4Z" fill="#dededc"/><path d="M3.4 13.4 H15.6 V19.6 H3.4Z" fill="#c4c4c2"/><path d="M16.4 13 L20.6 10 V16 L16.4 19.2Z" fill="#9a9a98"/></svg><svg style="left:408.5px;top:29.7px" width="16" height="16" viewBox="0 0 24 24"><ellipse cx="13" cy="20.6" rx="8" ry="1.9" fill="rgba(20,20,30,.6)"/><circle cx="15.6" cy="8.6" r="6.6" fill="#8ea6ea" stroke="#6a84d0" stroke-width=".6"/><circle cx="9.4" cy="13.8" r="7.2" fill="url(#rb)" stroke="#0a1e6c" stroke-width=".7"/></svg><svg style="left:431.0px;top:29.7px" width="16" height="16" viewBox="0 0 24 24"><ellipse cx="13" cy="20.6" rx="8" ry="1.9" fill="rgba(40,40,40,.55)"/><circle cx="9.4" cy="13.8" r="7.2" fill="url(#rg)" stroke="#6e6e6e" stroke-width=".7"/><circle cx="15.6" cy="8.6" r="6.4" fill="#fdfdfd" stroke="#9a9a9a" stroke-width=".7"/></svg><svg style="left:453.5px;top:29.7px" width="16" height="16" viewBox="0 0 24 24"><ellipse cx="13" cy="20.6" rx="8" ry="1.9" fill="rgba(40,40,40,.55)"/><path d="M15.6 2 A6.6 6.6 0 0 1 20.6 13 Q17.4 16 16.4 16 A7.2 7.2 0 1 1 6 7.4 Q9 6.6 9.4 6.4 A6.6 6.6 0 0 1 15.6 2Z" fill="url(#rg)" stroke="#6e6e6e" stroke-width=".7"/></svg><svg style="left:476.0px;top:29.7px" width="16" height="16" viewBox="0 0 24 24"><circle cx="9.4" cy="13.8" r="7.2" fill="#fcfcfc" stroke="#8a8a8a" stroke-width=".8"/><circle cx="15.6" cy="8.6" r="6.4" fill="rgba(252,252,252,.6)" stroke="#8a8a8a" stroke-width=".8"/><path d="M9.4 8.2 Q13 6.4 16.2 11 Q16.6 14.6 13.4 15 Q9.6 13 9.4 8.2Z" fill="#9a9a9a" stroke="#6a6a6a" stroke-width=".6"/><path d="M9 19.4 Q13 21 16.6 18.6" fill="none" stroke="#6a6a6a" stroke-width="1"/></svg><svg style="left:498.0px;top:29.7px" width="16" height="16" viewBox="0 0 24 24"><ellipse cx="12" cy="20.4" rx="9" ry="2" fill="rgba(60,60,60,.45)"/><path d="M9.4 8 L3.6 18.4 Q3.6 21 11 21 Q18.4 21 18.4 18.4 L13.6 9Z" fill="url(#rg)" stroke="#7a7a7a" stroke-width=".7"/><circle cx="11.4" cy="6.4" r="4.6" fill="#d8d8d8" stroke="#8a8a8a" stroke-width=".7"/><path d="M12 8 L21 15.4" stroke="#8a8a8a" stroke-width="1.1"/></svg><svg style="left:521.0px;top:29.7px" width="16" height="16" viewBox="0 0 24 24"><path d="M3.4 3.6 L12 5.6 V20.4 L3.4 17.6Z" fill="#bdbdbd" stroke="#9a9a9a" stroke-width=".7"/><path d="M7 6 L18.6 4 V17.6 L7 20.6Z" fill="#a8a8a8" stroke="#8c8c8c" stroke-width=".7"/><path d="M10 8.4 L16 7.4 V15.6 L10 17Z" fill="#cfcfcf"/><path d="M16.6 10 L21.6 11 V16.6 L16.6 15.6Z" fill="#b4b4b4" stroke="#9a9a9a" stroke-width=".6"/></svg><svg style="left:543.5px;top:29.7px" width="16" height="16" viewBox="0 0 24 24"><path d="M7 3 L18.4 2.4 V20.6 L7 21.6Z" fill="#a4a4a4" stroke="#8c8c8c" stroke-width=".7"/><path d="M2 8.6 L13.6 6 L22 7.6 L10.4 10.6Z M2 13.6 L13.6 11 L22 12.6 L10.4 15.6Z M2 18.6 L13.6 16 L22 17.6 L10.4 20.6Z" fill="#c4c4c4" stroke="#9c9c9c" stroke-width=".6"/></svg><svg style="left:573.5px;top:29.7px" width="16" height="16" viewBox="0 0 24 24"><path d="M4 7.4 Q4 3.2 8.4 3.2 H15.6 Q20.2 3.2 20.2 7.4 V12.6 Q20.2 16.4 16.6 16.4 H9Z" fill="#bcbcba" stroke="#6c6c6a" stroke-width=".7"/><path d="M5 6.6 Q5.4 4.2 8.6 4.2 H15.4 Q18.6 4.2 19.2 6.6Z" fill="#e4e4e2"/><circle cx="9.2" cy="12" r="6.2" fill="#0a0a0a"/><path d="M3.3 10.4 A6.2 6.2 0 0 1 12.6 6.8 L11.4 8.8 A3.9 3.9 0 0 0 5.6 11Z" fill="#f4e81c"/><circle cx="16" cy="12.4" r="1.4" fill="#f0e41c"/><path d="M14.4 16.2 L23 19.4 L22.6 20.8 L13.8 17.6Z" fill="#ece29a" stroke="#9a8e3a" stroke-width=".4"/></svg><svg style="left:596.0px;top:29.7px" width="16" height="16" viewBox="0 0 24 24"><path d="M4 7.4 Q4 3.2 8.4 3.2 H15.6 Q20.2 3.2 20.2 7.4 V12.6 Q20.2 16.4 16.6 16.4 H9Z" fill="#2a3a8a" stroke="#6c6c6a" stroke-width=".7"/><path d="M5 6.6 Q5.4 4.2 8.6 4.2 H15.4 Q18.6 4.2 19.2 6.6Z" fill="#3a52b8"/><circle cx="9.2" cy="12" r="6.2" fill="#0a0a0a"/><path d="M3.3 10.4 A6.2 6.2 0 0 1 12.6 6.8 L11.4 8.8 A3.9 3.9 0 0 0 5.6 11Z" fill="#f4e81c"/><circle cx="16" cy="12.4" r="1.4" fill="#f0e41c"/><path d="M14.4 16.2 L23 19.4 L22.6 20.8 L13.8 17.6Z" fill="#ece29a" stroke="#9a8e3a" stroke-width=".4"/><path d="M2.4 3 L9.6 21 L22 6.6" fill="none" stroke="#d81818" stroke-width="2.2" stroke-linejoin="miter"/><path d="M4 3.6 L13 2.4 L21 5.4 L12.6 8Z" fill="#2438a8" opacity=".9"/></svg><svg style="left:626.0px;top:29.7px" width="16" height="16" viewBox="0 0 24 24"><path d="M4 7.4 Q4 3.2 8.4 3.2 H15.6 Q20.2 3.2 20.2 7.4 V12.6 Q20.2 16.4 16.6 16.4 H9Z" fill="#bcbcba" stroke="#6c6c6a" stroke-width=".7"/><path d="M5 6.6 Q5.4 4.2 8.6 4.2 H15.4 Q18.6 4.2 19.2 6.6Z" fill="#e4e4e2"/><circle cx="9.2" cy="12" r="6.2" fill="#0a0a0a"/><path d="M3.3 10.4 A6.2 6.2 0 0 1 12.6 6.8 L11.4 8.8 A3.9 3.9 0 0 0 5.6 11Z" fill="#f4e81c"/><circle cx="16" cy="12.4" r="1.4" fill="#f0e41c"/><path d="M14.4 16.2 L23 19.4 L22.6 20.8 L13.8 17.6Z" fill="#ece29a" stroke="#9a8e3a" stroke-width=".4"/><path d="M3.6 18.8 L7 22.4 L20.6 7.4 L17.2 4Z" fill="#f2e68c" stroke="#7a6a1a" stroke-width=".6"/><path d="M5.2 20.6 L18.9 5.7" stroke="#d8c85a" stroke-width=".8"/><path d="M17.2 4 L21.8 1.4 L20.6 7.4Z" fill="#d8c090" stroke="#5a4a1a" stroke-width=".4"/><path d="M20 2.4 L21.8 1.4 L21.3 3.6Z" fill="#111"/><path d="M3.6 18.8 L2 21.4 Q2.6 23.4 4.6 23.6 L7 22.4Z" fill="#e89090" stroke="#a04a4a" stroke-width=".4"/></svg><svg style="left:648.0px;top:29.7px" width="16" height="16" viewBox="0 0 24 24"><rect x="2.6" y="4" width="18.8" height="17" fill="#2a8a2a"/><rect x="5" y="6.6" width="14" height="14.4" fill="#f2f1f0"/><g transform="translate(3.4,3.6) scale(.74)"><path d="M4 7.4 Q4 3.2 8.4 3.2 H15.6 Q20.2 3.2 20.2 7.4 V12.6 Q20.2 16.4 16.6 16.4 H9Z" fill="#bcbcba" stroke="#6c6c6a" stroke-width=".7"/><path d="M5 6.6 Q5.4 4.2 8.6 4.2 H15.4 Q18.6 4.2 19.2 6.6Z" fill="#e4e4e2"/><circle cx="9.2" cy="12" r="6.2" fill="#0a0a0a"/><path d="M3.3 10.4 A6.2 6.2 0 0 1 12.6 6.8 L11.4 8.8 A3.9 3.9 0 0 0 5.6 11Z" fill="#f4e81c"/><circle cx="16" cy="12.4" r="1.4" fill="#f0e41c"/><path d="M14.4 16.2 L23 19.4 L22.6 20.8 L13.8 17.6Z" fill="#ece29a" stroke="#9a8e3a" stroke-width=".4"/></g><path d="M3 6 L16 2.6 L20.6 15 L8 21.6Z" fill="none" stroke="#d82424" stroke-width="2"/></svg><svg style="left:670.5px;top:29.7px" width="16" height="16" viewBox="0 0 24 24"><g transform="translate(1,1.4) scale(.86)"><path d="M4 7.4 Q4 3.2 8.4 3.2 H15.6 Q20.2 3.2 20.2 7.4 V12.6 Q20.2 16.4 16.6 16.4 H9Z" fill="#bcbcba" stroke="#6c6c6a" stroke-width=".7"/><path d="M5 6.6 Q5.4 4.2 8.6 4.2 H15.4 Q18.6 4.2 19.2 6.6Z" fill="#e4e4e2"/><circle cx="9.2" cy="12" r="6.2" fill="#0a0a0a"/><path d="M3.3 10.4 A6.2 6.2 0 0 1 12.6 6.8 L11.4 8.8 A3.9 3.9 0 0 0 5.6 11Z" fill="#f4e81c"/><circle cx="16" cy="12.4" r="1.4" fill="#f0e41c"/><path d="M14.4 16.2 L23 19.4 L22.6 20.8 L13.8 17.6Z" fill="#ece29a" stroke="#9a8e3a" stroke-width=".4"/></g><path d="M2.6 7 L12 2.4 L21.6 14 L13 21.6Z" fill="none" stroke="#d82424" stroke-width="2"/></svg><svg style="left:693.0px;top:29.7px" width="16" height="16" viewBox="0 0 24 24"><rect x="2.6" y="4" width="18.8" height="17" fill="#2a8a2a"/><rect x="5" y="6.6" width="14" height="14.4" fill="#f2f1f0"/><g transform="translate(3.4,3.6) scale(.74)"><path d="M4 7.4 Q4 3.2 8.4 3.2 H15.6 Q20.2 3.2 20.2 7.4 V12.6 Q20.2 16.4 16.6 16.4 H9Z" fill="#bcbcba" stroke="#6c6c6a" stroke-width=".7"/><path d="M5 6.6 Q5.4 4.2 8.6 4.2 H15.4 Q18.6 4.2 19.2 6.6Z" fill="#e4e4e2"/><circle cx="9.2" cy="12" r="6.2" fill="#0a0a0a"/><path d="M3.3 10.4 A6.2 6.2 0 0 1 12.6 6.8 L11.4 8.8 A3.9 3.9 0 0 0 5.6 11Z" fill="#f4e81c"/><circle cx="16" cy="12.4" r="1.4" fill="#f0e41c"/><path d="M14.4 16.2 L23 19.4 L22.6 20.8 L13.8 17.6Z" fill="#ece29a" stroke="#9a8e3a" stroke-width=".4"/></g></svg><svg style="left:167.5px;top:33.7px" width="3" height="8"><path d="M0 1.5 H3 M0 3.6 H3 M0 5.7 H3" stroke="#d2cfca" stroke-width=".7"/></svg><svg style="left:400.5px;top:33.7px" width="3" height="8"><path d="M0 1.5 H3 M0 3.6 H3 M0 5.7 H3" stroke="#d2cfca" stroke-width=".7"/></svg><svg style="left:566.25px;top:33.7px" width="3" height="8"><path d="M0 1.5 H3 M0 3.6 H3 M0 5.7 H3" stroke="#d2cfca" stroke-width=".7"/></svg><div class="abs" style="left:618.5px;top:30.200000000000003px;width:1px;height:15px;background:#dfddd9"></div></div>
<div id="combo" class="abs" style="left:41px;top:65px;width:292px;height:670px">
<span class="txt" style="left:1px;top:2px;font-size:9.3px;color:#3c3c3c">Combo View</span>
<svg style="left:270.3px;top:4.3px" width="7" height="7"><rect x=".5" y=".5" width="6" height="6" rx="1.2" fill="#e3e1de" stroke="#a09d98" stroke-width=".8"/><path d="M2.2 4.8 L4.6 2.4 M3.2 2.2 H4.8 V3.8" fill="none" stroke="#8a8782" stroke-width=".7"/></svg><svg style="left:280.7px;top:4.3px" width="7" height="7"><rect x=".5" y=".5" width="6" height="6" rx="1.2" fill="#e3e1de" stroke="#a09d98" stroke-width=".8"/><path d="M2 2 L5 5 M5 2 L2 5" stroke="#5e5b56" stroke-width="1"/></svg>
<div class="abs" style="left:0.4px;top:33px;width:289.5px;height:633.3px;border:2.4px solid #dbd9d6;border-radius:3px;background:#f4f3f2"></div>
<div class="abs" style="left:37px;top:17.2px;width:31.5px;height:16.5px;border:1px solid #d9d6d2;border-bottom:none;border-radius:3px 3px 0 0;background:linear-gradient(#f0efed,#e7e5e2)"></div>
<span class="txt" style="left:41.5px;top:20px;font-size:9.3px">Tasks</span>
<div class="abs" style="left:0.5px;top:15.2px;width:36.5px;height:20.3px;border:1px solid #dad7d3;border-bottom:none;border-radius:3px 3px 0 0;background:#f4f3f2"></div>
<span class="txt" style="left:5px;top:19px;font-size:9.3px">Model</span>
<div class="abs" style="left:2.7px;top:35.5px;width:284.4px;height:286.8px;background:#fff;border-bottom:1.3px solid #d9d6d2"></div>
<div class="abs" style="left:2.7px;top:35.5px;width:261px;height:15.2px;background:linear-gradient(#fdfdfd,#efeeec);border-bottom:1px solid #d4d1cc;border-right:1px solid #dcd9d4"></div>
<div class="abs" style="left:263.7px;top:35.5px;width:23.4px;height:15.4px;background:#f2f1f0"></div>
<span class="txt" style="left:3.9px;top:37px;font-size:9.5px">Labels &amp; Attributes</span>
<span class="txt" style="left:4px;top:51px;font-size:9.5px">Application</span>
<svg style="left:7.2px;top:66.8px" width="6" height="5"><path d="M.3 .4 H4.7 L2.5 4Z" fill="#4c4c4c"/></svg>
<svg style="left:17px;top:63px" width="8.4" height="11"><path d="M.6 .5 H5.2 L7.6 2.9 V10.3 H.6Z" fill="#fcfcfc" stroke="#6a6a6a" stroke-width=".7"/><path d="M5.2 .5 V2.9 H7.6" fill="#e4e4e4" stroke="#6a6a6a" stroke-width=".6"/><path d="M2 3.8 H4.6 M2 5.2 H6" stroke="#b8b8b8" stroke-width=".5"/><rect x="1.7" y="6.6" width="2.3" height="2.4" fill="#22b8c8"/><rect x="4" y="6.6" width="2.4" height="1.6" fill="#d838c8"/></svg>
<span class="txt b" style="left:30px;top:63px;font-size:9.22px;color:#2a2a2a">Miniskybot-wheel-futaba3003-6-arms-horn-assembly</span>
<svg style="left:29.1px;top:77.3px" width="8" height="7.2"><path d="M.6 2.2 L2.2 .6 H7.4 V5.4 L5.8 6.6 H.6Z" fill="#0a1488" stroke="#05083c" stroke-width=".7" stroke-linejoin="round"/><path d="M.9 2.4 H5.6 V6.3 H.9Z" fill="#0c1cf0"/><path d="M5.9 2.3 L7.2 1.1 V5.2 L5.9 6.2Z" fill="#0a1290"/><path d="M2.4 .9 H7 L5.7 2 H1.2Z" fill="#1226b8"/></svg>
<span class="txt" style="left:42.3px;top:75.0px;font-size:9.37px;color:#3c3c3c">Wheel-futaba-30036-6-arms-horn-final</span>
<svg style="left:29.1px;top:89.2px" width="8" height="7.2"><path d="M.6 2.2 L2.2 .6 H7.4 V5.4 L5.8 6.6 H.6Z" fill="#0a1488" stroke="#05083c" stroke-width=".7" stroke-linejoin="round"/><path d="M.9 2.4 H5.6 V6.3 H.9Z" fill="#0c1cf0"/><path d="M5.9 2.3 L7.2 1.1 V5.2 L5.9 6.2Z" fill="#0a1290"/><path d="M2.4 .9 H7 L5.7 2 H1.2Z" fill="#1226b8"/></svg>
<span class="txt" style="left:42.3px;top:86.9px;font-size:9.37px;color:#3c3c3c">6-arms-horn-final001</span>
<svg style="left:28.400000000000002px;top:100.3px" width="9.6" height="7.6"><ellipse cx="4.8" cy="3.8" rx="4.5" ry="3.4" fill="#2447c8" stroke="#10207a" stroke-width=".6"/><ellipse cx="4.9" cy="3.9" rx="2.3" ry="1.5" fill="#fff"/><path d="M.8 2.6 Q2.6 .4 5.4 .7 M4.9 3.9 L4 1.4 M4.9 3.9 L1.8 5.8 M4.9 3.9 L8.4 5" fill="none" stroke="#e03a2a" stroke-width=".9"/><path d="M1.2 5.6 Q4.8 8.2 8.6 5.4" fill="none" stroke="#4a78e8" stroke-width=".8"/></svg>
<span class="txt" style="left:42.3px;top:98.8px;font-size:9.37px;color:#3c3c3c">o-ring</span>
<svg style="left:29.1px;top:113.0px" width="8" height="7.2"><path d="M.6 2.2 L2.2 .6 H7.4 V5.4 L5.8 6.6 H.6Z" fill="#0a1488" stroke="#05083c" stroke-width=".7" stroke-linejoin="round"/><path d="M.9 2.4 H5.6 V6.3 H.9Z" fill="#0c1cf0"/><path d="M5.9 2.3 L7.2 1.1 V5.2 L5.9 6.2Z" fill="#0a1290"/><path d="M2.4 .9 H7 L5.7 2 H1.2Z" fill="#1226b8"/></svg>
<span class="txt" style="left:42.3px;top:110.7px;font-size:9.37px;color:#3c3c3c">bolt-1</span>
<svg style="left:29.1px;top:124.89999999999999px" width="8" height="7.2"><path d="M.6 2.2 L2.2 .6 H7.4 V5.4 L5.8 6.6 H.6Z" fill="#0a1488" stroke="#05083c" stroke-width=".7" stroke-linejoin="round"/><path d="M.9 2.4 H5.6 V6.3 H.9Z" fill="#0c1cf0"/><path d="M5.9 2.3 L7.2 1.1 V5.2 L5.9 6.2Z" fill="#0a1290"/><path d="M2.4 .9 H7 L5.7 2 H1.2Z" fill="#1226b8"/></svg>
<span class="txt b" style="left:42.3px;top:122.6px;font-size:9.2px;color:#2a2a2a">bolt-002</span>
<div class="abs" style="left:141px;top:324px;width:8px;height:1px;border-top:1px dotted #bbb"></div>
<div class="abs" style="left:1.4px;top:326.2px;width:286.6px;height:320.6px;border:1.3px solid #d6d3cf;background:#fff"></div>
<div class="abs" style="left:2.5px;top:327.5px;width:285px;height:16px;background:linear-gradient(#fdfdfd,#efeeec);border-bottom:1px solid #d4d1cc"></div>
<div class="abs" style="left:64px;top:328.5px;width:1px;height:14px;background:#dad7d2"></div>
<span class="txt" style="left:5.7px;top:330px;font-size:9.5px">Property</span>
<span class="txt" style="left:68px;top:330px;font-size:9.3px">Value</span>
<svg style="left:0;top:645px" width="292" height="24" viewBox="0 0 292 24">
<path d="M1.2 1.2 L31 1.2 L26.8 16.3 Q26.2 18.2 24.2 18.2 L8.6 18.2 Q6.6 18.2 6 16.3 Z" fill="#f2f1f0" stroke="#8f8c86" stroke-width=".8"/>
<path d="M31.8 1.2 L61 1.2 L56.4 16.8 Q55.8 18.8 53.8 18.8 L39.4 18.8 Q37.4 18.8 36.8 16.8 Z" fill="#fff" stroke="#8f8c86" stroke-width=".8"/>
<text x="6.6" y="12.8" font-size="9.4" fill="#3c3c3c">View</text>
<text x="37.5" y="13.3" font-size="9.4" fill="#3c3c3c">Data</text>
</svg>
</div>
<div id="mdi" class="abs" style="left:0;top:0;width:0;height:0">
<div class="abs" style="left:334px;top:64.3px;width:433.79999999999995px;height:323.7px;border:1px solid;border-color:#b2b0ac #8f8c87 #8f8c87 #b2b0ac;border-radius:3px 3px 0 0;background:#f0efed"><div class="abs" style="left:0;top:0;width:431.79999999999995px;height:14.2px;border-radius:2px 2px 0 0;background:linear-gradient(#ffffff,#f6f5f4 45%,#e6e4e1);"></div><svg style="left:3.2px;top:2.6px" width="10.08" height="10.08" viewBox="0 0 12.5 12.5"><path d="M1 .6 H6.8 V3 H3.6 V4.6 H5.8 V6.8 H3.6 V10.4 H1Z" fill="#f23a12"/><path d="M1 .6 H2.6 V10.4 H1Z" fill="#cc1c0c"/><g transform="translate(8,6.9)" fill="#1a3aa8"><rect x="-1.1" y="-4.7" width="2.2" height="2.4" transform="rotate(0)"/><rect x="-1.1" y="-4.7" width="2.2" height="2.4" transform="rotate(45)"/><rect x="-1.1" y="-4.7" width="2.2" height="2.4" transform="rotate(90)"/><rect x="-1.1" y="-4.7" width="2.2" height="2.4" transform="rotate(135)"/><rect x="-1.1" y="-4.7" width="2.2" height="2.4" transform="rotate(180)"/><rect x="-1.1" y="-4.7" width="2.2" height="2.4" transform="rotate(225)"/><rect x="-1.1" y="-4.7" width="2.2" height="2.4" transform="rotate(270)"/><rect x="-1.1" y="-4.7" width="2.2" height="2.4" transform="rotate(315)"/><circle r="3.5"/><circle r="1.45" fill="#e4ebf8"/></g></svg><span class="txt b" style="left:18px;width:369.79999999999995px;text-align:center;top:1.6px;font-size:9.21px;color:#333;">Miniskybot-wheel-futaba3003-6-arms-horn-assembly : 4</span><div class="abs" style="left:392.4px;top:1.6px;width:10.8px;height:10.6px;border:1px solid #b4b1ac;border-radius:2px;background:linear-gradient(#fdfdfd,#ecebe9)"></div><svg style="left:392.4px;top:1.6px" width="10.8" height="10.6"><path d="M2.8 8.2 H8" stroke="#1a1a1a" stroke-width="1.3"/></svg><div class="abs" style="left:405.04999999999995px;top:1.6px;width:10.8px;height:10.6px;border:1px solid #b4b1ac;border-radius:2px;background:linear-gradient(#fdfdfd,#ecebe9)"></div><svg style="left:405.04999999999995px;top:1.6px" width="10.8" height="10.6"><path d="M3.1 3.3 H7.7 V7.9 H3.1Z" fill="none" stroke="#1a1a1a" stroke-width="1.1"/><path d="M3.1 3.5 H7.7" stroke="#1a1a1a" stroke-width="1.4"/></svg><div class="abs" style="left:417.7px;top:1.6px;width:10.8px;height:10.6px;border:1px solid #b4b1ac;border-radius:2px;background:linear-gradient(#fdfdfd,#ecebe9)"></div><svg style="left:417.7px;top:1.6px" width="10.8" height="10.6"><path d="M3 2.9 L7.8 7.7 M7.8 2.9 L3 7.7" stroke="#1a1a1a" stroke-width="1.5"/></svg><div class="abs" style="left:2.2px;top:14.4px;width:427.8px;height:306.2px;overflow:hidden;background:linear-gradient(#343468,#9797ae)"><svg style="left:0;top:0" width="427.8" height="306.2" viewBox="337.2 79.7 427.8 306.2" font-family="Liberation Sans,sans-serif"><defs><linearGradient id="v4g" x1="0" x2="1" y1="0" y2="0"><stop offset="0" stop-color="#082a9e"/><stop offset=".05" stop-color="#0b3ace"/><stop offset=".2" stop-color="#1048e4"/><stop offset=".5" stop-color="#1a62ff"/><stop offset=".8" stop-color="#1048e4"/><stop offset=".95" stop-color="#0b3ace"/><stop offset="1" stop-color="#082a9e"/></linearGradient><linearGradient id="v4k" x1="0" x2="0" y1="0" y2="1"><stop offset="0" stop-color="#040404"/><stop offset=".42" stop-color="#1e1e1e"/><stop offset=".6" stop-color="#101010"/><stop offset="1" stop-color="#040404"/></linearGradient></defs><rect x="497.25" y="221.2" width="108" height="1.6" fill="#222"/><path d="M536.25 221.9 L537.85 218.7 H564.65 L566.25 221.9Z" fill="#2e2e2e" stroke="#151515" stroke-width=".6"/><path d="M543.45 218.9 Q543.65 215.5 548.25 215.3 H554.25 Q558.85 215.5 559.05 218.9Z" fill="#d8d8d8" stroke="#2a2a2a" stroke-width=".7"/><rect x="545.85" y="216.5" width="9" height="1.5" fill="#fafafa"/><rect x="447.5" y="222.5" width="207.5" height="27.0" fill="url(#v4g)" stroke="#0a1440" stroke-width=".8"/><rect x="443.65" y="230.1" width="215.2" height="11.8" rx="5.9" fill="url(#v4k)"/><path d="M750 370.5 l0 -10.4" stroke="#2a2a9c" stroke-width="1.5"/><path d="M751.5 364.1 L750.0 361.6 L748.5 364.1Z" fill="#2a2a9c"/><text x="751.9" y="360.6" font-size="6.4" fill="#161616" font-family="Liberation Sans,sans-serif">Z</text><path d="M750 370.5 l10.8 0" stroke="#9c1a1a" stroke-width="1.5"/><path d="M756.7 372.0 L759.3 370.5 L756.7 369.0Z" fill="#9c1a1a"/><text x="761.6" y="370.9" font-size="6.4" fill="#161616" font-family="Liberation Sans,sans-serif">X</text><rect x="749.1" y="369.6" width="1.8" height="1.8" fill="#1a981a"/><text x="752.2" y="370.0" font-size="6.4" fill="#161616" font-family="Liberation Sans,sans-serif">Y</text></svg></div></div>
<div class="abs" style="left:766.8px;top:64.3px;width:433.20000000000005px;height:323.7px;border:1px solid;border-color:#b2b0ac #b2b0ac #8f8c87 #8f8c87;border-radius:3px 3px 0 0;background:#f0efed"><div class="abs" style="left:0;top:0;width:431.20000000000005px;height:14.2px;border-radius:2px 2px 0 0;background:linear-gradient(#ffffff,#f6f5f4 45%,#e6e4e1);"></div><svg style="left:3.2px;top:2.6px" width="10.08" height="10.08" viewBox="0 0 12.5 12.5"><path d="M1 .6 H6.8 V3 H3.6 V4.6 H5.8 V6.8 H3.6 V10.4 H1Z" fill="#f23a12"/><path d="M1 .6 H2.6 V10.4 H1Z" fill="#cc1c0c"/><g transform="translate(8,6.9)" fill="#1a3aa8"><rect x="-1.1" y="-4.7" width="2.2" height="2.4" transform="rotate(0)"/><rect x="-1.1" y="-4.7" width="2.2" height="2.4" transform="rotate(45)"/><rect x="-1.1" y="-4.7" width="2.2" height="2.4" transform="rotate(90)"/><rect x="-1.1" y="-4.7" width="2.2" height="2.4" transform="rotate(135)"/><rect x="-1.1" y="-4.7" width="2.2" height="2.4" transform="rotate(180)"/><rect x="-1.1" y="-4.7" width="2.2" height="2.4" transform="rotate(225)"/><rect x="-1.1" y="-4.7" width="2.2" height="2.4" transform="rotate(270)"/><rect x="-1.1" y="-4.7" width="2.2" height="2.4" transform="rotate(315)"/><circle r="3.5"/><circle r="1.45" fill="#e4ebf8"/></g></svg><span class="txt b" style="left:18px;width:369.20000000000005px;text-align:center;top:1.6px;font-size:9.21px;color:#333;">Miniskybot-wheel-futaba3003-6-arms-horn-assembly : 3</span><div class="abs" style="left:391.80000000000007px;top:1.6px;width:10.8px;height:10.6px;border:1px solid #b4b1ac;border-radius:2px;background:linear-gradient(#fdfdfd,#ecebe9)"></div><svg style="left:391.80000000000007px;top:1.6px" width="10.8" height="10.6"><path d="M2.8 8.2 H8" stroke="#1a1a1a" stroke-width="1.3"/></svg><div class="abs" style="left:404.45000000000005px;top:1.6px;width:10.8px;height:10.6px;border:1px solid #b4b1ac;border-radius:2px;background:linear-gradient(#fdfdfd,#ecebe9)"></div><svg style="left:404.45000000000005px;top:1.6px" width="10.8" height="10.6"><path d="M3.1 3.3 H7.7 V7.9 H3.1Z" fill="none" stroke="#1a1a1a" stroke-width="1.1"/><path d="M3.1 3.5 H7.7" stroke="#1a1a1a" stroke-width="1.4"/></svg><div class="abs" style="left:417.1000000000001px;top:1.6px;width:10.8px;height:10.6px;border:1px solid #b4b1ac;border-radius:2px;background:linear-gradient(#fdfdfd,#ecebe9)"></div><svg style="left:417.1000000000001px;top:1.6px" width="10.8" height="10.6"><path d="M3 2.9 L7.8 7.7 M7.8 2.9 L3 7.7" stroke="#1a1a1a" stroke-width="1.5"/></svg><div class="abs" style="left:2.2px;top:14.4px;width:427.2px;height:306.2px;overflow:hidden;background:linear-gradient(#343468,#9797ae)"><svg style="left:0;top:0" width="427.2" height="306.2" viewBox="770.0 79.7 427.2 306.2" font-family="Liberation Sans,sans-serif"><defs><linearGradient id="su3" x1="0" x2="1" y1="0" y2="0"><stop offset="0" stop-color="#07206e"/><stop offset="0.16" stop-color="#1252ea"/><stop offset="0.72" stop-color="#1252ea"/><stop offset="0.84" stop-color="#0b38ac"/><stop offset="1" stop-color="#0b38ac"/></linearGradient><linearGradient id="sl3" x1="0" x2="1" y1="0" y2="0"><stop offset="0" stop-color="#082680"/><stop offset="0.14" stop-color="#1252ea"/><stop offset="0.72" stop-color="#1252ea"/><stop offset="0.84" stop-color="#0b38ac"/><stop offset="1" stop-color="#0b38ac"/></linearGradient></defs><path d="M879.2 239.5 L879.2 246.0 A103.75 59.90 0 0 0 1086.8 246.0 L1086.8 239.5 A103.75 59.90 0 0 0 879.2 239.5Z" fill="url(#sl3)" stroke="#081030" stroke-width=".9"/><ellipse cx="983.0" cy="235.0" rx="101.7" ry="58.7" fill="none" stroke="#0c0c0c" stroke-width="11.2"/><path d="M879.2 224.0 L879.2 229.1 A103.75 59.90 0 0 0 1086.8 229.1 L1086.8 224.0 A103.75 59.90 0 0 0 879.2 224.0Z" fill="url(#su3)" stroke="#081030" stroke-width=".9"/><ellipse cx="983.0" cy="224.0" rx="103.75" ry="59.90" fill="#0b41b2" stroke="#06102c" stroke-width=".9"/><path d="M1057.6 265.6 l.6 5 l-.4 5 l.3 11" fill="none" stroke="#0a1a50" stroke-width=".7"/><polygon points="994.5,208.2 1013.5,200.1 1015.3,199.4 1017.2,199.0 1019.3,198.9 1021.4,199.0 1023.4,199.3 1025.3,199.9 1026.9,200.6 1028.2,201.6 1029.2,202.6 1029.8,203.8 1029.9,205.0 1029.7,206.2 1029.0,207.3 1027.9,208.4 1013.7,219.3 1013.0,220.0 1012.8,220.7 1013.0,221.2 1013.8,221.7 1015.0,222.1 1036.7,227.5 1038.6,228.1 1040.2,228.8 1041.4,229.8 1042.4,230.9 1042.9,232.1 1043.0,233.3 1042.6,234.5 1041.9,235.6 1040.8,236.6 1039.3,237.5 1037.6,238.2 1035.6,238.6 1033.6,238.9 1031.5,238.8 1008.0,237.2 1006.6,237.2 1005.5,237.4 1004.8,237.8 1004.5,238.4 1004.5,239.2 1007.3,252.8 1007.3,254.0 1006.9,255.2 1006.1,256.3 1004.9,257.3 1003.4,258.2 1001.7,258.8 999.7,259.3 997.6,259.4 995.5,259.4 993.5,259.1 991.6,258.6 990.0,257.8 988.6,256.9 987.6,255.9 978.3,243.3 977.6,242.6 976.7,242.2 975.8,242.0 974.7,242.2 973.5,242.6 954.5,250.7 952.7,251.4 950.8,251.8 948.7,251.9 946.6,251.8 944.6,251.5 942.7,250.9 941.1,250.2 939.8,249.2 938.8,248.2 938.2,247.0 938.1,245.8 938.3,244.6 939.0,243.5 940.1,242.4 954.3,231.5 955.0,230.8 955.2,230.1 955.0,229.6 954.2,229.1 953.0,228.7 931.3,223.3 929.4,222.7 927.8,222.0 926.6,221.0 925.6,219.9 925.1,218.7 925.0,217.5 925.4,216.3 926.1,215.2 927.2,214.2 928.7,213.3 930.4,212.6 932.4,212.2 934.4,211.9 936.5,212.0 960.0,213.6 961.4,213.6 962.5,213.4 963.2,213.0 963.5,212.4 963.5,211.6 960.7,198.0 960.7,196.8 961.1,195.6 961.9,194.5 963.1,193.5 964.6,192.6 966.3,192.0 968.3,191.5 970.4,191.4 972.5,191.4 974.5,191.7 976.4,192.2 978.0,193.0 979.4,193.9 980.4,194.9 989.7,207.5 990.4,208.2 991.3,208.6 992.2,208.8 993.3,208.6" fill="#151515" stroke="#0c0c0c" stroke-width="1.2" stroke-linejoin="round"/><polygon points="994.5,206.9 1013.5,198.8 1015.3,198.1 1017.2,197.7 1019.3,197.6 1021.4,197.7 1023.4,198.0 1025.3,198.5 1026.9,199.3 1028.2,200.3 1029.2,201.3 1029.8,202.5 1029.9,203.7 1029.7,204.9 1029.0,206.0 1027.9,207.1 1013.7,218.0 1013.0,218.7 1012.8,219.3 1013.0,219.9 1013.8,220.4 1015.0,220.8 1036.7,226.2 1038.6,226.7 1040.2,227.5 1041.4,228.5 1042.4,229.6 1042.9,230.8 1043.0,232.0 1042.6,233.2 1041.9,234.3 1040.8,235.3 1039.3,236.2 1037.6,236.9 1035.6,237.3 1033.6,237.5 1031.5,237.5 1008.0,235.9 1006.6,235.9 1005.5,236.1 1004.8,236.5 1004.5,237.1 1004.5,237.9 1007.3,251.5 1007.3,252.7 1006.9,253.9 1006.1,255.0 1004.9,256.0 1003.4,256.9 1001.7,257.5 999.7,257.9 997.6,258.1 995.5,258.1 993.5,257.8 991.6,257.3 990.0,256.5 988.6,255.6 987.6,254.5 978.3,242.0 977.6,241.3 976.7,240.9 975.8,240.7 974.7,240.8 973.5,241.3 954.5,249.4 952.7,250.1 950.8,250.5 948.7,250.6 946.6,250.5 944.6,250.2 942.7,249.6 941.1,248.9 939.8,247.9 938.8,246.9 938.2,245.7 938.1,244.5 938.3,243.3 939.0,242.1 940.1,241.1 954.3,230.2 955.0,229.5 955.2,228.8 955.0,228.3 954.2,227.8 953.0,227.4 931.3,222.0 929.4,221.4 927.8,220.6 926.6,219.7 925.6,218.6 925.1,217.4 925.0,216.2 925.4,215.0 926.1,213.9 927.2,212.9 928.7,212.0 930.4,211.3 932.4,210.9 934.4,210.6 936.5,210.7 960.0,212.3 961.4,212.3 962.5,212.1 963.2,211.7 963.5,211.1 963.5,210.2 960.7,196.7 960.7,195.5 961.1,194.3 961.9,193.2 963.1,192.2 964.6,191.3 966.3,190.7 968.3,190.2 970.4,190.0 972.5,190.1 974.5,190.4 976.4,190.9 978.0,191.7 979.4,192.6 980.4,193.6 989.7,206.2 990.4,206.9 991.3,207.3 992.2,207.5 993.3,207.3" fill="#2b2b2b" stroke="#0e0e0e" stroke-width="1" stroke-linejoin="round"/><ellipse cx="1032.7" cy="231.6" rx="2.50" ry="1.44" fill="#272727" stroke="#0c0c0c" stroke-width=".7"/><ellipse cx="1022.1" cy="230.0" rx="2.50" ry="1.44" fill="#272727" stroke="#0c0c0c" stroke-width=".7"/><ellipse cx="1011.0" cy="228.3" rx="2.50" ry="1.44" fill="#272727" stroke="#0c0c0c" stroke-width=".7"/><ellipse cx="997.0" cy="252.2" rx="2.50" ry="1.44" fill="#272727" stroke="#0c0c0c" stroke-width=".7"/><ellipse cx="994.2" cy="246.1" rx="2.50" ry="1.44" fill="#272727" stroke="#0c0c0c" stroke-width=".7"/><ellipse cx="991.2" cy="239.7" rx="2.50" ry="1.44" fill="#272727" stroke="#0c0c0c" stroke-width=".7"/><ellipse cx="935.3" cy="216.6" rx="2.50" ry="1.44" fill="#272727" stroke="#0c0c0c" stroke-width=".7"/><ellipse cx="945.9" cy="218.2" rx="2.50" ry="1.44" fill="#272727" stroke="#0c0c0c" stroke-width=".7"/><ellipse cx="957.0" cy="219.9" rx="2.50" ry="1.44" fill="#272727" stroke="#0c0c0c" stroke-width=".7"/><ellipse cx="971.0" cy="196.0" rx="2.50" ry="1.44" fill="#272727" stroke="#0c0c0c" stroke-width=".7"/><ellipse cx="973.8" cy="202.1" rx="2.50" ry="1.44" fill="#272727" stroke="#0c0c0c" stroke-width=".7"/><ellipse cx="976.8" cy="208.5" rx="2.50" ry="1.44" fill="#272727" stroke="#0c0c0c" stroke-width=".7"/><ellipse cx="1019.9" cy="203.4" rx="2.50" ry="1.44" fill="#272727" stroke="#0c0c0c" stroke-width=".7"/><ellipse cx="1003.4" cy="212.9" rx="2.50" ry="1.44" fill="#272727" stroke="#0c0c0c" stroke-width=".7"/><ellipse cx="948.1" cy="244.8" rx="2.50" ry="1.44" fill="#272727" stroke="#0c0c0c" stroke-width=".7"/><ellipse cx="964.6" cy="235.3" rx="2.50" ry="1.44" fill="#272727" stroke="#0c0c0c" stroke-width=".7"/><ellipse cx="984.0" cy="224.1" rx="16.80" ry="9.70" fill="#292929" stroke="#0c0c0c" stroke-width="1"/><path d="M970.4 222.3 L970.4 224.1 A13.60 7.85 0 0 0 997.6 224.1 L997.6 222.3 A13.60 7.85 0 0 0 970.4 222.3Z" fill="#1c1c1c" stroke="#0a0a0a" stroke-width=".8"/><ellipse cx="984.0" cy="222.3" rx="13.60" ry="7.85" fill="#303030" stroke="#0a0a0a" stroke-width=".8"/><ellipse cx="984.0" cy="222.3" rx="10.80" ry="6.24" fill="#1a1a1a" stroke="#080808" stroke-width=".8"/><clipPath id="hb3"><ellipse cx="984.0" cy="222.3" rx="10.6" ry="6.12"/></clipPath><g clip-path="url(#hb3)"><ellipse cx="984.0" cy="225.4" rx="9.40" ry="5.43" fill="#2c2c2c" stroke="#0a0a0a" stroke-width=".7"/><ellipse cx="984.0" cy="224.9" rx="5.00" ry="2.89" fill="#1e1e1e" stroke="#0a0a0a" stroke-width=".7"/><ellipse cx="984.0" cy="225.9" rx="3.20" ry="1.85" fill="#343434"/></g><path d="M1003.6 205.5 L1003.6 207.9 A8.40 4.85 0 0 0 1020.4 207.9 L1020.4 205.5 A8.40 4.85 0 0 0 1003.6 205.5Z" fill="#4a4a4a" stroke="#0c0c0c" stroke-width=".9"/><ellipse cx="1012.0" cy="205.5" rx="8.40" ry="4.85" fill="#c4c4c4" stroke="#141414" stroke-width=".9"/><ellipse cx="1012.0" cy="205.0" rx="6.60" ry="3.81" fill="#7c7c7c" stroke="#1c1c1c" stroke-width=".9"/><path d="M1007.4 203.5 L1007.4 205.0 A4.60 2.66 0 0 0 1016.6 205.0 L1016.6 203.5 A4.60 2.66 0 0 0 1007.4 203.5Z" fill="#3c3c3c" stroke="#111" stroke-width=".7"/><ellipse cx="1012.0" cy="203.5" rx="4.60" ry="2.66" fill="#d6d6d6" stroke="#1a1a1a" stroke-width=".8"/><ellipse cx="1012.0" cy="203.5" rx="2.20" ry="1.27" fill="#3a3a3a"/><path d="M947.6 237.8 L947.6 240.3 A8.40 4.85 0 0 0 964.4 240.3 L964.4 237.8 A8.40 4.85 0 0 0 947.6 237.8Z" fill="#4a4a4a" stroke="#0c0c0c" stroke-width=".9"/><ellipse cx="956.0" cy="237.8" rx="8.40" ry="4.85" fill="#c4c4c4" stroke="#141414" stroke-width=".9"/><ellipse cx="956.0" cy="237.3" rx="6.60" ry="3.81" fill="#7c7c7c" stroke="#1c1c1c" stroke-width=".9"/><path d="M951.4 235.9 L951.4 237.3 A4.60 2.66 0 0 0 960.6 237.3 L960.6 235.9 A4.60 2.66 0 0 0 951.4 235.9Z" fill="#3c3c3c" stroke="#111" stroke-width=".7"/><ellipse cx="956.0" cy="235.9" rx="4.60" ry="2.66" fill="#d6d6d6" stroke="#1a1a1a" stroke-width=".8"/><ellipse cx="956.0" cy="235.9" rx="2.20" ry="1.27" fill="#3a3a3a"/><path d="M1182.6 370.4 l0 -9.6" stroke="#2a2a9c" stroke-width="1.5"/><path d="M1184.1 364.4 L1182.6 362.1 L1181.1 364.4Z" fill="#2a2a9c"/><text x="1184.0" y="360.0" font-size="6.4" fill="#161616" font-family="Liberation Sans,sans-serif">Z</text><path d="M1182.6 370.4 l6 -3.2" stroke="#1a981a" stroke-width="1.5"/><path d="M1187.0 369.7 L1187.8 367.6 L1185.6 367.1Z" fill="#1a981a"/><text x="1190.0" y="367.0" font-size="6.4" fill="#161616" font-family="Liberation Sans,sans-serif">Y</text><path d="M1182.6 370.4 l8.6 5.4" stroke="#9c1a1a" stroke-width="1.5"/><path d="M1187.1 375.0 L1190.0 375.0 L1188.7 372.5Z" fill="#9c1a1a"/><text x="1192.6" y="376.4" font-size="6.4" fill="#161616" font-family="Liberation Sans,sans-serif">X</text></svg></div></div>
<div class="abs" style="left:334px;top:387.6px;width:433.79999999999995px;height:323.0px;border:1px solid;border-color:#8f8c87 #8f8c87 #96938e #b2b0ac;border-radius:3px 3px 0 0;background:#f0efed"><div class="abs" style="left:0;top:0;width:431.79999999999995px;height:14.2px;border-radius:2px 2px 0 0;background:linear-gradient(#ffffff,#f6f5f4 45%,#e6e4e1);"></div><svg style="left:3.2px;top:2.6px" width="10.08" height="10.08" viewBox="0 0 12.5 12.5"><path d="M1 .6 H6.8 V3 H3.6 V4.6 H5.8 V6.8 H3.6 V10.4 H1Z" fill="#f23a12"/><path d="M1 .6 H2.6 V10.4 H1Z" fill="#cc1c0c"/><g transform="translate(8,6.9)" fill="#1a3aa8"><rect x="-1.1" y="-4.7" width="2.2" height="2.4" transform="rotate(0)"/><rect x="-1.1" y="-4.7" width="2.2" height="2.4" transform="rotate(45)"/><rect x="-1.1" y="-4.7" width="2.2" height="2.4" transform="rotate(90)"/><rect x="-1.1" y="-4.7" width="2.2" height="2.4" transform="rotate(135)"/><rect x="-1.1" y="-4.7" width="2.2" height="2.4" transform="rotate(180)"/><rect x="-1.1" y="-4.7" width="2.2" height="2.4" transform="rotate(225)"/><rect x="-1.1" y="-4.7" width="2.2" height="2.4" transform="rotate(270)"/><rect x="-1.1" y="-4.7" width="2.2" height="2.4" transform="rotate(315)"/><circle r="3.5"/><circle r="1.45" fill="#e4ebf8"/></g></svg><span class="txt b" style="left:18px;width:369.79999999999995px;text-align:center;top:1.6px;font-size:9.21px;color:#333;">Miniskybot-wheel-futaba3003-6-arms-horn-assembly : 2</span><div class="abs" style="left:392.4px;top:1.6px;width:10.8px;height:10.6px;border:1px solid #b4b1ac;border-radius:2px;background:linear-gradient(#fdfdfd,#ecebe9)"></div><svg style="left:392.4px;top:1.6px" width="10.8" height="10.6"><path d="M2.8 8.2 H8" stroke="#1a1a1a" stroke-width="1.3"/></svg><div class="abs" style="left:405.04999999999995px;top:1.6px;width:10.8px;height:10.6px;border:1px solid #b4b1ac;border-radius:2px;background:linear-gradient(#fdfdfd,#ecebe9)"></div><svg style="left:405.04999999999995px;top:1.6px" width="10.8" height="10.6"><path d="M3.1 3.3 H7.7 V7.9 H3.1Z" fill="none" stroke="#1a1a1a" stroke-width="1.1"/><path d="M3.1 3.5 H7.7" stroke="#1a1a1a" stroke-width="1.4"/></svg><div class="abs" style="left:417.7px;top:1.6px;width:10.8px;height:10.6px;border:1px solid #b4b1ac;border-radius:2px;background:linear-gradient(#fdfdfd,#ecebe9)"></div><svg style="left:417.7px;top:1.6px" width="10.8" height="10.6"><path d="M3 2.9 L7.8 7.7 M7.8 2.9 L3 7.7" stroke="#1a1a1a" stroke-width="1.5"/></svg><div class="abs" style="left:2.2px;top:14.4px;width:427.8px;height:305.5px;overflow:hidden;background:linear-gradient(#343468,#9797ae)"><svg style="left:0;top:0" width="427.8" height="305.5" viewBox="337.2 403.0 427.8 305.5" font-family="Liberation Sans,sans-serif"><circle cx="551" cy="555" r="107.3" fill="#0a0a0a"/><circle cx="551" cy="555" r="103.4" fill="#0c4ef6"/><polygon points="537.4,526.5 540.8,503.1 541.3,501.1 542.2,499.2 543.5,497.5 545.1,496.2 546.9,495.1 548.9,494.5 551.0,494.3 553.1,494.5 555.1,495.1 556.9,496.2 558.5,497.5 559.8,499.2 560.7,501.1 561.2,503.1 564.6,526.5 564.9,527.9 565.5,528.8 566.4,529.3 567.5,529.4 568.9,529.0 590.8,520.2 592.8,519.7 594.9,519.5 597.0,519.8 599.0,520.5 600.8,521.5 602.3,523.0 603.6,524.6 604.4,526.6 604.9,528.6 604.9,530.7 604.5,532.8 603.7,534.7 602.5,536.4 601.0,537.9 582.4,552.5 581.4,553.5 580.9,554.5 580.9,555.5 581.4,556.5 582.4,557.5 601.0,572.1 602.5,573.6 603.7,575.3 604.5,577.2 604.9,579.3 604.9,581.4 604.4,583.4 603.6,585.4 602.3,587.0 600.8,588.5 599.0,589.5 597.0,590.2 594.9,590.5 592.8,590.3 590.8,589.8 568.9,581.0 567.5,580.6 566.4,580.7 565.5,581.2 564.9,582.1 564.6,583.5 561.2,606.9 560.7,608.9 559.8,610.8 558.5,612.5 556.9,613.8 555.1,614.9 553.1,615.5 551.0,615.7 548.9,615.5 546.9,614.9 545.1,613.8 543.5,612.5 542.2,610.8 541.3,608.9 540.8,606.9 537.4,583.5 537.1,582.1 536.5,581.2 535.6,580.7 534.5,580.6 533.1,581.0 511.2,589.8 509.2,590.3 507.1,590.5 505.0,590.2 503.0,589.5 501.2,588.5 499.7,587.0 498.4,585.4 497.6,583.4 497.1,581.4 497.1,579.3 497.5,577.2 498.3,575.3 499.5,573.6 501.0,572.1 519.6,557.5 520.6,556.5 521.1,555.5 521.1,554.5 520.6,553.5 519.6,552.5 501.0,537.9 499.5,536.4 498.3,534.7 497.5,532.8 497.1,530.7 497.1,528.6 497.6,526.6 498.4,524.6 499.7,523.0 501.2,521.5 503.0,520.5 505.0,519.8 507.1,519.5 509.2,519.7 511.2,520.2 533.1,529.0 534.5,529.4 535.6,529.3 536.5,528.8 537.1,527.9" fill="#3b3b3b" stroke="#141414" stroke-width="1.3" stroke-linejoin="round"/><ellipse cx="594.6" cy="529.8" rx="2.50" ry="2.50" fill="#0c4ef6" stroke="#161616" stroke-width=".7"/><ellipse cx="585.1" cy="535.3" rx="2.50" ry="2.50" fill="#74749a" stroke="#161616" stroke-width=".7"/><ellipse cx="575.2" cy="541.0" rx="2.50" ry="2.50" fill="#0c4ef6" stroke="#161616" stroke-width=".7"/><ellipse cx="594.6" cy="580.2" rx="2.50" ry="2.50" fill="#0c4ef6" stroke="#161616" stroke-width=".7"/><ellipse cx="585.1" cy="574.7" rx="2.50" ry="2.50" fill="#74749a" stroke="#161616" stroke-width=".7"/><ellipse cx="575.2" cy="569.0" rx="2.50" ry="2.50" fill="#0c4ef6" stroke="#161616" stroke-width=".7"/><ellipse cx="507.4" cy="580.2" rx="2.50" ry="2.50" fill="#0c4ef6" stroke="#161616" stroke-width=".7"/><ellipse cx="516.9" cy="574.7" rx="2.50" ry="2.50" fill="#74749a" stroke="#161616" stroke-width=".7"/><ellipse cx="526.8" cy="569.0" rx="2.50" ry="2.50" fill="#0c4ef6" stroke="#161616" stroke-width=".7"/><ellipse cx="507.4" cy="529.8" rx="2.50" ry="2.50" fill="#0c4ef6" stroke="#161616" stroke-width=".7"/><ellipse cx="516.9" cy="535.3" rx="2.50" ry="2.50" fill="#74749a" stroke="#161616" stroke-width=".7"/><ellipse cx="526.8" cy="541.0" rx="2.50" ry="2.50" fill="#0c4ef6" stroke="#161616" stroke-width=".7"/><ellipse cx="551.0" cy="504.2" rx="2.50" ry="2.50" fill="#0c4ef6" stroke="#161616" stroke-width=".7"/><ellipse cx="551.0" cy="527.6" rx="2.50" ry="2.50" fill="#0c4ef6" stroke="#161616" stroke-width=".7"/><ellipse cx="551.0" cy="605.8" rx="2.50" ry="2.50" fill="#0c4ef6" stroke="#161616" stroke-width=".7"/><ellipse cx="551.0" cy="582.4" rx="2.50" ry="2.50" fill="#0c4ef6" stroke="#161616" stroke-width=".7"/><circle cx="551" cy="555" r="16.6" fill="#333" stroke="#121212" stroke-width="1.3"/><circle cx="551" cy="555" r="13.4" fill="#3a3a3a" stroke="#151515" stroke-width="1"/><circle cx="551" cy="555" r="10.8" fill="#404040" stroke="#1c1c1c" stroke-width="1.6" stroke-dasharray="6.4 2.1"/><circle cx="551" cy="555" r="5.1" fill="#6f6f9c" stroke="#222" stroke-width=".6"/><circle cx="551" cy="515.4" r="8.5" fill="#e9e9e9" stroke="#1a1a1a" stroke-width="1"/><circle cx="551" cy="515.4" r="6.2" fill="#cfcfcf" stroke="#3a3a3a" stroke-width=".9"/><circle cx="551" cy="515.4" r="4" fill="#dedede" stroke="#4a4a4a" stroke-width=".7"/><path d="M548 515.4 H554 M551 512.4 V518.4" stroke="#555" stroke-width=".9"/><circle cx="551" cy="594.6" r="8.5" fill="#e9e9e9" stroke="#1a1a1a" stroke-width="1"/><circle cx="551" cy="594.6" r="6.2" fill="#cfcfcf" stroke="#3a3a3a" stroke-width=".9"/><circle cx="551" cy="594.6" r="4" fill="#dedede" stroke="#4a4a4a" stroke-width=".7"/><path d="M548 594.6 H554 M551 591.6 V597.6" stroke="#555" stroke-width=".9"/><path d="M750 693.2 l0 -10.4" stroke="#1a981a" stroke-width="1.5"/><path d="M751.5 686.8 L750.0 684.3 L748.5 686.8Z" fill="#1a981a"/><text x="751.9" y="683.3000000000001" font-size="6.4" fill="#161616" font-family="Liberation Sans,sans-serif">Y</text><path d="M750 693.2 l10.8 0" stroke="#9c1a1a" stroke-width="1.5"/><path d="M756.7 694.7 L759.3 693.2 L756.7 691.7Z" fill="#9c1a1a"/><text x="761.6" y="693.6" font-size="6.4" fill="#161616" font-family="Liberation Sans,sans-serif">X</text><rect x="749.1" y="692.3000000000001" width="1.8" height="1.8" fill="#2a2a9c"/><text x="752.2" y="692.7" font-size="6.4" fill="#161616" font-family="Liberation Sans,sans-serif">Z</text></svg></div></div>
<div class="abs" style="left:766.8px;top:387.6px;width:433.20000000000005px;height:323.0px;border:1px solid;border-color:#8f8c87 #b2b0ac #96938e #8f8c87;border-radius:3px 3px 0 0;background:#f0efed"><div class="abs" style="left:0;top:0;width:431.20000000000005px;height:14.2px;border-radius:2px 2px 0 0;background:linear-gradient(#f79465,#f07b49 35%,#e9713f);"></div><svg style="left:3.2px;top:2.6px" width="10.08" height="10.08" viewBox="0 0 12.5 12.5"><path d="M1 .6 H6.8 V3 H3.6 V4.6 H5.8 V6.8 H3.6 V10.4 H1Z" fill="#f23a12"/><path d="M1 .6 H2.6 V10.4 H1Z" fill="#cc1c0c"/><g transform="translate(8,6.9)" fill="#1a3aa8"><rect x="-1.1" y="-4.7" width="2.2" height="2.4" transform="rotate(0)"/><rect x="-1.1" y="-4.7" width="2.2" height="2.4" transform="rotate(45)"/><rect x="-1.1" y="-4.7" width="2.2" height="2.4" transform="rotate(90)"/><rect x="-1.1" y="-4.7" width="2.2" height="2.4" transform="rotate(135)"/><rect x="-1.1" y="-4.7" width="2.2" height="2.4" transform="rotate(180)"/><rect x="-1.1" y="-4.7" width="2.2" height="2.4" transform="rotate(225)"/><rect x="-1.1" y="-4.7" width="2.2" height="2.4" transform="rotate(270)"/><rect x="-1.1" y="-4.7" width="2.2" height="2.4" transform="rotate(315)"/><circle r="3.5"/><circle r="1.45" fill="#e4ebf8"/></g></svg><span class="txt b" style="left:18px;width:369.20000000000005px;text-align:center;top:1.6px;font-size:9.21px;color:#fff;text-shadow:0 .6px 0 rgba(120,50,20,.6);">Miniskybot-wheel-futaba3003-6-arms-horn-assembly : 1</span><div class="abs" style="left:391.80000000000007px;top:1.6px;width:10.8px;height:10.6px;border:1px solid rgba(150,60,20,.5);border-radius:2px;background:rgba(255,255,255,.07)"></div><svg style="left:391.80000000000007px;top:1.6px" width="10.8" height="10.6"><path d="M2.8 8.2 H8" stroke="#fbe4d6" stroke-width="1.3"/></svg><div class="abs" style="left:404.45000000000005px;top:1.6px;width:10.8px;height:10.6px;border:1px solid rgba(150,60,20,.5);border-radius:2px;background:rgba(255,255,255,.07)"></div><svg style="left:404.45000000000005px;top:1.6px" width="10.8" height="10.6"><path d="M3.1 3.3 H7.7 V7.9 H3.1Z" fill="none" stroke="#fbe4d6" stroke-width="1.1"/><path d="M3.1 3.5 H7.7" stroke="#fbe4d6" stroke-width="1.4"/></svg><div class="abs" style="left:417.1000000000001px;top:1.6px;width:10.8px;height:10.6px;border:1px solid rgba(150,60,20,.5);border-radius:2px;background:rgba(255,255,255,.07)"></div><svg style="left:417.1000000000001px;top:1.6px" width="10.8" height="10.6"><path d="M3 2.9 L7.8 7.7 M7.8 2.9 L3 7.7" stroke="#fbe4d6" stroke-width="1.5"/></svg><div class="abs" style="left:2.2px;top:14.4px;width:427.2px;height:305.5px;overflow:hidden;background:linear-gradient(#343468,#9797ae)"><svg style="left:0;top:0" width="427.2" height="305.5" viewBox="770.0 403.0 427.2 305.5" font-family="Liberation Sans,sans-serif"><defs><linearGradient id="su1" x1="0" x2="1" y1="0" y2="0"><stop offset="0" stop-color="#08287e"/><stop offset="0.1" stop-color="#0b37a8"/><stop offset="0.72" stop-color="#0b37a8"/><stop offset="0.84" stop-color="#0b37a8"/><stop offset="1" stop-color="#0b37a8"/></linearGradient><linearGradient id="sl1" x1="0" x2="1" y1="0" y2="0"><stop offset="0" stop-color="#082a88"/><stop offset="0.12" stop-color="#0d45d4"/><stop offset="0.72" stop-color="#0d45d4"/><stop offset="0.84" stop-color="#0d45d4"/><stop offset="1" stop-color="#0d45d4"/></linearGradient></defs><path d="M858.0 556.4 L858.0 565.4 A125.95 76.96 0 0 0 1110.0 565.4 L1110.0 556.4 A125.95 76.96 0 0 0 858.0 556.4Z" fill="url(#sl1)" stroke="#081030" stroke-width=".9"/><ellipse cx="984.0" cy="551.0" rx="123.5" ry="75.4" fill="none" stroke="#0c0c0c" stroke-width="12.4"/><path d="M858.0 539.5 L858.0 543.5 A125.95 76.96 0 0 0 1110.0 543.5 L1110.0 539.5 A125.95 76.96 0 0 0 858.0 539.5Z" fill="url(#su1)" stroke="#081030" stroke-width=".9"/><ellipse cx="984.0" cy="539.5" rx="125.95" ry="76.96" fill="#0b41b2" stroke="#06102c" stroke-width=".9"/><defs><linearGradient id="cbw" x1="0" x2="1" y1="0" y2="0"><stop offset="0" stop-color="#0a3aa8"/><stop offset=".18" stop-color="#1256ee"/><stop offset=".6" stop-color="#0f4cdc"/><stop offset="1" stop-color="#0a37a4"/></linearGradient></defs><ellipse cx="984.0" cy="539.5" rx="24.40" ry="14.91" fill="url(#cbw)" stroke="#06102c" stroke-width="1.1"/><clipPath id="cb1"><ellipse cx="984.0" cy="539.5" rx="24.4" ry="14.9"/></clipPath><g clip-path="url(#cb1)"><ellipse cx="984.0" cy="543.4" rx="19.18" ry="11.72" fill="#2d2d2d" stroke="#0a0a0a" stroke-width="1.1"/><defs><linearGradient id="cbh" x1="0" x2="1" y1="0" y2="0"><stop offset="0" stop-color="#232323"/><stop offset=".5" stop-color="#3a3a3a"/><stop offset="1" stop-color="#262626"/></linearGradient></defs><ellipse cx="984.0" cy="544.0" rx="12.50" ry="7.64" fill="url(#cbh)" stroke="#0a0a0a" stroke-width="1"/><ellipse cx="984.0" cy="549.6" rx="11.65" ry="7.12" fill="#303030" stroke="#141414" stroke-width=".6"/></g><ellipse cx="984.0" cy="539.5" rx="24.40" ry="14.91" fill="none" stroke="#06102c" stroke-width="1.1"/><ellipse cx="971.0" cy="511.2" rx="3.64" ry="2.23" fill="#0e49cc" stroke="#050c22" stroke-width="1"/><ellipse cx="937.4" cy="532.2" rx="3.64" ry="2.23" fill="#0e49cc" stroke="#050c22" stroke-width="1"/><ellipse cx="997.0" cy="567.8" rx="3.64" ry="2.23" fill="#0e49cc" stroke="#050c22" stroke-width="1"/><ellipse cx="1030.6" cy="546.8" rx="3.64" ry="2.23" fill="#0e49cc" stroke="#050c22" stroke-width="1"/><ellipse cx="1017.6" cy="518.5" rx="4.49" ry="2.74" fill="#0a0a0a" stroke="#050c22" stroke-width=".8"/><ellipse cx="1017.6" cy="518.9" rx="2.55" ry="1.56" fill="#d6d6d6"/><ellipse cx="950.4" cy="560.5" rx="4.49" ry="2.74" fill="#0a0a0a" stroke="#050c22" stroke-width=".8"/><ellipse cx="950.4" cy="560.9" rx="2.55" ry="1.56" fill="#d6d6d6"/><path d="M1183 688 l-6.6 -4.6" stroke="#9c1a1a" stroke-width="1.5"/><path d="M1179.8 683.9 L1177.3 684.0 L1178.1 686.4Z" fill="#9c1a1a"/><text x="1172" y="682.6" font-size="6.4" fill="#161616" font-family="Liberation Sans,sans-serif">X</text><path d="M1183 688 l6.4 -5" stroke="#1a981a" stroke-width="1.5"/><path d="M1187.9 686.1 L1188.5 683.7 L1186.0 683.7Z" fill="#1a981a"/><text x="1190.6" y="682.4" font-size="6.4" fill="#161616" font-family="Liberation Sans,sans-serif">Y</text><path d="M1183 688 l0 8.4" stroke="#2a2a9c" stroke-width="1.5"/><path d="M1181.5 693.2 L1183.0 695.2 L1184.5 693.2Z" fill="#2a2a9c"/><text x="1184.6" y="697.6" font-size="6.4" fill="#161616" font-family="Liberation Sans,sans-serif">Z</text></svg></div></div>
</div>
<div id="tabbar" class="abs" style="left:334px;top:710px;width:866px;height:22px;overflow:hidden">
<div class="abs" style="left:0;top:0.6px;width:866px;height:1px;background:#cfccc7"></div>
<div class="abs" style="left:271.3px;top:1.2px;width:270.2px;height:18.6px;background:linear-gradient(#f3f2f1,#ebe9e7 70%,#e6e4e1);border:1px solid #d8d5d1;border-top:none;border-radius:0 0 3px 3px"></div>
<div class="abs" style="left:542px;top:1.2px;width:270.6px;height:18.6px;background:linear-gradient(#f3f2f1,#ebe9e7 70%,#e6e4e1);border:1px solid #d8d5d1;border-top:none;border-radius:0 0 3px 3px"></div>
<div class="abs" style="left:813.2px;top:1.2px;width:80px;height:18.6px;background:linear-gradient(#f3f2f1,#ebe9e7 70%,#e6e4e1);border:1px solid #d8d5d1;border-top:none;border-radius:0 0 3px 3px"></div>
<div class="abs" style="left:0.5px;top:0.5px;width:270px;height:20.5px;background:#fff;border:1px solid #cfccc7;border-top:none;border-radius:0 0 3px 3px"></div>
<svg style="left:5.4px;top:5.4px" width="8.64" height="8.64" viewBox="0 0 12.5 12.5"><path d="M1 .6 H6.8 V3 H3.6 V4.6 H5.8 V6.8 H3.6 V10.4 H1Z" fill="#f23a12"/><path d="M1 .6 H2.6 V10.4 H1Z" fill="#cc1c0c"/><g transform="translate(8,6.9)" fill="#1a3aa8"><rect x="-1.1" y="-4.7" width="2.2" height="2.4" transform="rotate(0)"/><rect x="-1.1" y="-4.7" width="2.2" height="2.4" transform="rotate(45)"/><rect x="-1.1" y="-4.7" width="2.2" height="2.4" transform="rotate(90)"/><rect x="-1.1" y="-4.7" width="2.2" height="2.4" transform="rotate(135)"/><rect x="-1.1" y="-4.7" width="2.2" height="2.4" transform="rotate(180)"/><rect x="-1.1" y="-4.7" width="2.2" height="2.4" transform="rotate(225)"/><rect x="-1.1" y="-4.7" width="2.2" height="2.4" transform="rotate(270)"/><rect x="-1.1" y="-4.7" width="2.2" height="2.4" transform="rotate(315)"/><circle r="3.5"/><circle r="1.45" fill="#e4ebf8"/></g></svg>
<svg style="left:275.6px;top:5.4px" width="8.64" height="8.64" viewBox="0 0 12.5 12.5"><path d="M1 .6 H6.8 V3 H3.6 V4.6 H5.8 V6.8 H3.6 V10.4 H1Z" fill="#f23a12"/><path d="M1 .6 H2.6 V10.4 H1Z" fill="#cc1c0c"/><g transform="translate(8,6.9)" fill="#1a3aa8"><rect x="-1.1" y="-4.7" width="2.2" height="2.4" transform="rotate(0)"/><rect x="-1.1" y="-4.7" width="2.2" height="2.4" transform="rotate(45)"/><rect x="-1.1" y="-4.7" width="2.2" height="2.4" transform="rotate(90)"/><rect x="-1.1" y="-4.7" width="2.2" height="2.4" transform="rotate(135)"/><rect x="-1.1" y="-4.7" width="2.2" height="2.4" transform="rotate(180)"/><rect x="-1.1" y="-4.7" width="2.2" height="2.4" transform="rotate(225)"/><rect x="-1.1" y="-4.7" width="2.2" height="2.4" transform="rotate(270)"/><rect x="-1.1" y="-4.7" width="2.2" height="2.4" transform="rotate(315)"/><circle r="3.5"/><circle r="1.45" fill="#e4ebf8"/></g></svg>
<svg style="left:546.2px;top:5.4px" width="8.64" height="8.64" viewBox="0 0 12.5 12.5"><path d="M1 .6 H6.8 V3 H3.6 V4.6 H5.8 V6.8 H3.6 V10.4 H1Z" fill="#f23a12"/><path d="M1 .6 H2.6 V10.4 H1Z" fill="#cc1c0c"/><g transform="translate(8,6.9)" fill="#1a3aa8"><rect x="-1.1" y="-4.7" width="2.2" height="2.4" transform="rotate(0)"/><rect x="-1.1" y="-4.7" width="2.2" height="2.4" transform="rotate(45)"/><rect x="-1.1" y="-4.7" width="2.2" height="2.4" transform="rotate(90)"/><rect x="-1.1" y="-4.7" width="2.2" height="2.4" transform="rotate(135)"/><rect x="-1.1" y="-4.7" width="2.2" height="2.4" transform="rotate(180)"/><rect x="-1.1" y="-4.7" width="2.2" height="2.4" transform="rotate(225)"/><rect x="-1.1" y="-4.7" width="2.2" height="2.4" transform="rotate(270)"/><rect x="-1.1" y="-4.7" width="2.2" height="2.4" transform="rotate(315)"/><circle r="3.5"/><circle r="1.45" fill="#e4ebf8"/></g></svg>
<svg style="left:817.9px;top:5.4px" width="8.64" height="8.64" viewBox="0 0 12.5 12.5"><path d="M1 .6 H6.8 V3 H3.6 V4.6 H5.8 V6.8 H3.6 V10.4 H1Z" fill="#f23a12"/><path d="M1 .6 H2.6 V10.4 H1Z" fill="#cc1c0c"/><g transform="translate(8,6.9)" fill="#1a3aa8"><rect x="-1.1" y="-4.7" width="2.2" height="2.4" transform="rotate(0)"/><rect x="-1.1" y="-4.7" width="2.2" height="2.4" transform="rotate(45)"/><rect x="-1.1" y="-4.7" width="2.2" height="2.4" transform="rotate(90)"/><rect x="-1.1" y="-4.7" width="2.2" height="2.4" transform="rotate(135)"/><rect x="-1.1" y="-4.7" width="2.2" height="2.4" transform="rotate(180)"/><rect x="-1.1" y="-4.7" width="2.2" height="2.4" transform="rotate(225)"/><rect x="-1.1" y="-4.7" width="2.2" height="2.4" transform="rotate(270)"/><rect x="-1.1" y="-4.7" width="2.2" height="2.4" transform="rotate(315)"/><circle r="3.5"/><circle r="1.45" fill="#e4ebf8"/></g></svg>
<span class="txt" style="left:19.7px;top:5px;font-size:9.24px">Miniskybot-wheel-futaba3003-6-arms-horn-assembly : 1</span>
<span class="txt" style="left:291px;top:4.5px;font-size:9.24px">Miniskybot-wheel-futaba3003-6-arms-horn-assembly : 2</span>
<span class="txt" style="left:561.5px;top:4.5px;font-size:9.24px">Miniskybot-wheel-futaba3003-6-arms-horn-assembly : 3</span>
<span class="txt" style="left:833px;top:4.5px;font-size:9.24px">Mir</span>
<svg style="left:254.8px;top:6.1px" width="9" height="9"><path d="M1.5 1.5 L7.5 7.5 M7.5 1.5 L1.5 7.5" stroke="#55534f" stroke-width="2.5" stroke-linecap="butt"/></svg>
<svg style="left:526.1px;top:6.1px" width="9" height="9"><path d="M1.5 1.5 L7.5 7.5 M7.5 1.5 L1.5 7.5" stroke="#55534f" stroke-width="2.5" stroke-linecap="butt"/></svg>
<svg style="left:797.1px;top:6.1px" width="9" height="9"><path d="M1.5 1.5 L7.5 7.5 M7.5 1.5 L1.5 7.5" stroke="#55534f" stroke-width="2.5" stroke-linecap="butt"/></svg>
<div class="abs" style="left:845px;top:1.5px;width:21px;height:19px;background:linear-gradient(90deg,rgba(240,239,237,0),#efeeec 25%)"></div>
<div class="abs" style="left:847.7px;top:2px;width:6.6px;height:17.6px;border-radius:2.5px;background:#f7f6f5;box-shadow:0 0 1px #d8d5d1"></div>
<div class="abs" style="left:857.3px;top:2px;width:6.7px;height:17.6px;border-radius:2.5px;background:#fafaf9;box-shadow:0 0 1px #d8d5d1"></div>
<div class="abs" style="left:855.4px;top:7px;width:.9px;height:7.6px;background:#8a8894"></div>
<svg style="left:847px;top:3.5px" width="19" height="15"><path d="M5.3 4.6 L2.4 7.3 L5.3 10Z" fill="#a9a7a3"/><path d="M12.4 4.6 L15.3 7.3 L12.4 10Z" fill="#6f6d6a"/></svg>
</div>
<span class="txt" style="right:3px;top:735px;font-size:8.95px;color:#3c3c3c">113.56 x 81.06 mm</span>
</div>
</body></html>
